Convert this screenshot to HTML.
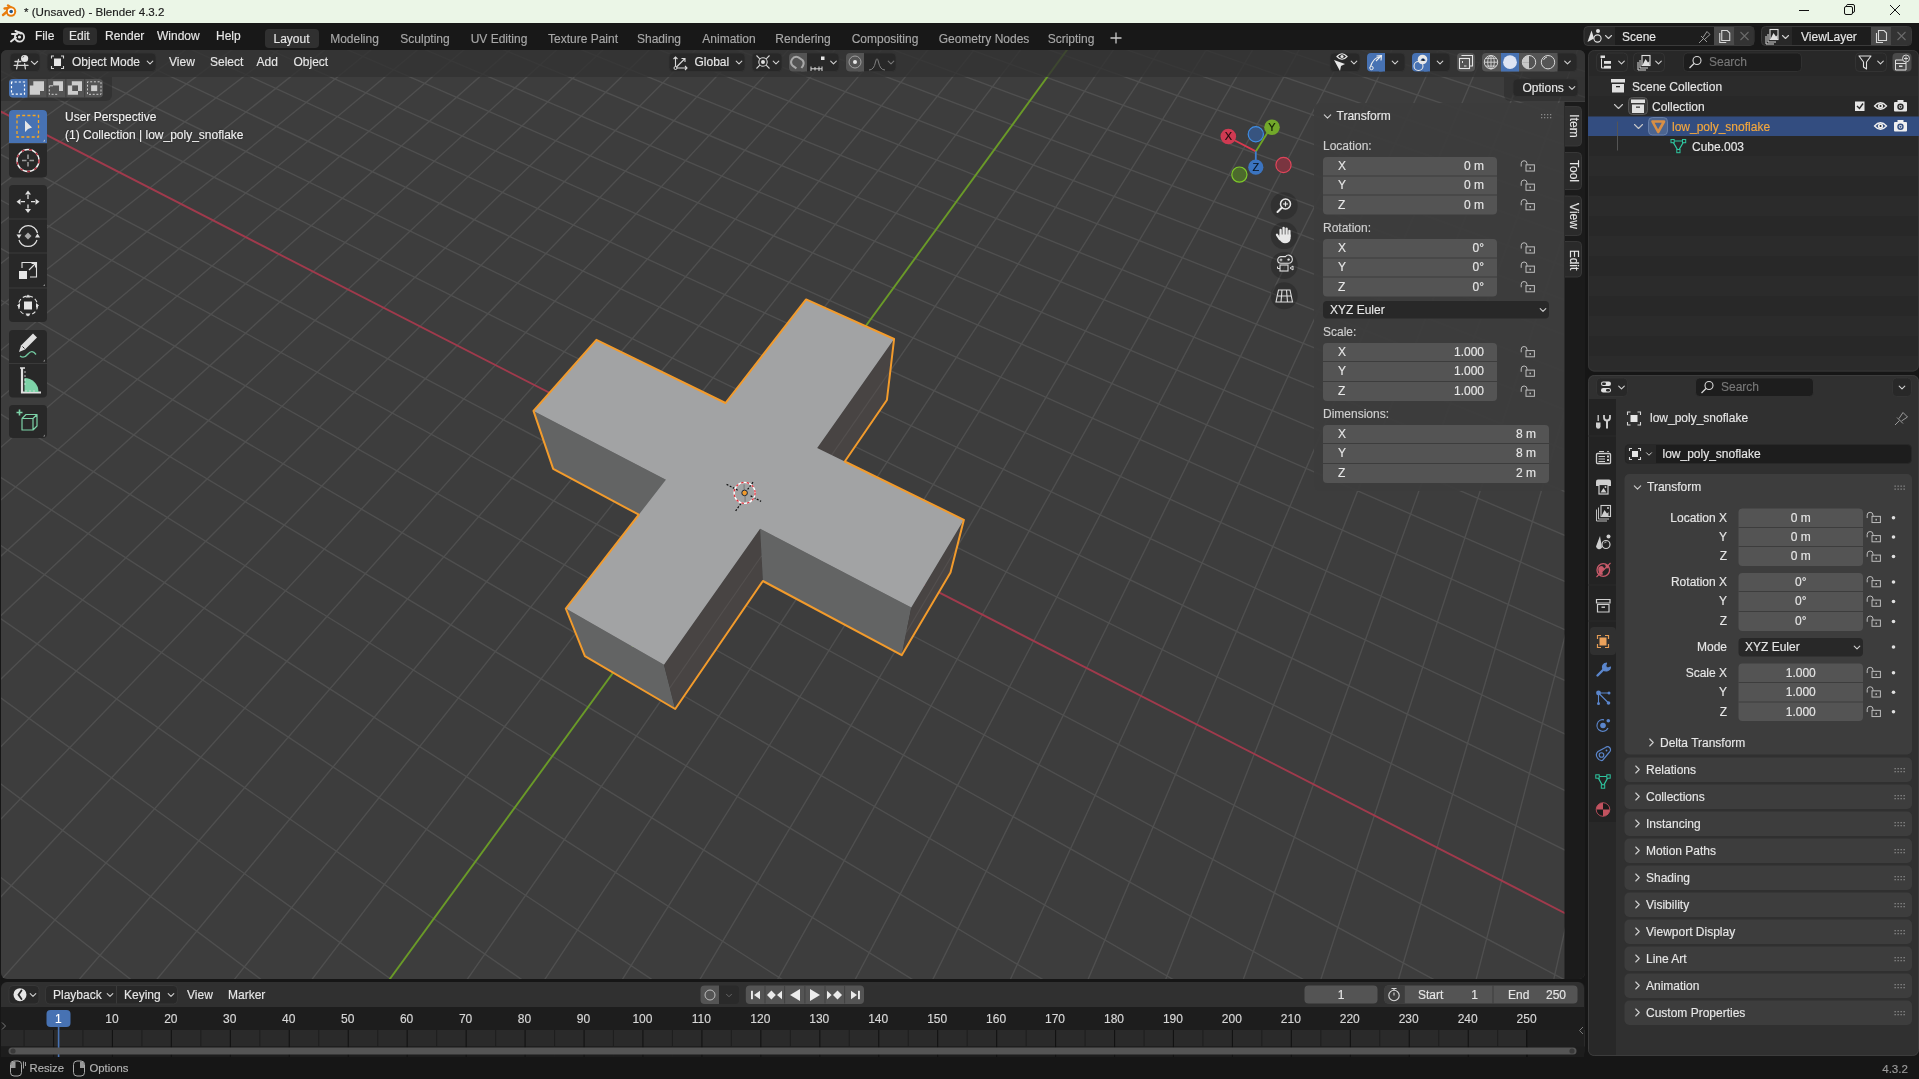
<!DOCTYPE html><html><head><meta charset="utf-8"><style>
html,body{margin:0;padding:0;width:1919px;height:1079px;overflow:hidden;background:#161616;font-family:"Liberation Sans", sans-serif;}
div{box-sizing:border-box}
#root div{-webkit-text-stroke:0.15px currentColor}
#root{position:absolute;left:0;top:0;width:1919px;height:1079px;will-change:transform}
svg{overflow:visible}
</style></head><body><div id="root"><div style="position:absolute;left:0px;top:0px;width:1919px;height:23px;background:#ebf6e7;border-radius:0px;"></div><svg style="position:absolute;left:0px;top:0px;" width="1919" height="23" viewBox="0 0 1919 23"><g transform="translate(10,11.5)"><circle cx="1" cy="0" r="5.2" fill="#e87d0d"/><path d="M-7 3.5L-1 -1.5M-5.5 -3L0 -3.5M-2 -6L4 -2" stroke="#e87d0d" stroke-width="2.4" stroke-linecap="round"/><circle cx="1" cy="0" r="3.2" fill="#fff"/><circle cx="1.2" cy="0" r="1.8" fill="#265787"/></g><path d="M1799 10.5H1809" stroke="#111" stroke-width="1"/><rect x="1844.5" y="6.5" width="8" height="8" rx="1.5" fill="none" stroke="#111"/><path d="M1846.5 6.5V5.5A1.5 1.5 0 0 1 1848 4.5H1853A1.5 1.5 0 0 1 1854.5 6V11A1.5 1.5 0 0 1 1853 12.5H1852.5" fill="none" stroke="#111"/><path d="M1890 5L1900 15M1900 5L1890 15" stroke="#111" stroke-width="1"/></svg><div style="position:absolute;left:24px;top:4.52px;font-size:11.6px;line-height:13.92px;color:#1b1b1b;white-space:pre;">* (Unsaved) - Blender 4.3.2</div><div style="position:absolute;left:0px;top:23px;width:1919px;height:27px;background:#181818;border-radius:0px;"></div><svg style="position:absolute;left:0px;top:23px;" width="1919" height="27" viewBox="0 0 1919 27"><g transform="translate(18,13.5)" stroke="#e0e0e0" fill="none"><circle cx="1.5" cy="0.5" r="4.6" stroke-width="1.8"/><circle cx="1.5" cy="0.5" r="1.6" fill="#e0e0e0" stroke="none"/><path d="M-7 5L-2 1M-6 -2.5H-1M-2.5 -5.5L3 -3" stroke-width="2" stroke-linecap="round"/></g><rect x="63" y="4.5" width="34" height="17.5" rx="4" fill="#2c2c2c"/><rect x="265" y="6" width="54" height="19" rx="4" fill="#303030"/></svg><div style="position:absolute;left:35px;top:29.14px;font-size:12px;line-height:14.40px;color:#e6e6e6;white-space:pre;">File</div><div style="position:absolute;left:69px;top:29.14px;font-size:12px;line-height:14.40px;color:#e6e6e6;white-space:pre;">Edit</div><div style="position:absolute;left:105px;top:29.14px;font-size:12px;line-height:14.40px;color:#e6e6e6;white-space:pre;">Render</div><div style="position:absolute;left:157px;top:29.14px;font-size:12px;line-height:14.40px;color:#e6e6e6;white-space:pre;">Window</div><div style="position:absolute;left:216px;top:29.14px;font-size:12px;line-height:14.40px;color:#e6e6e6;white-space:pre;">Help</div><div style="position:absolute;left:91.5px;width:400px;top:32.14px;font-size:12px;line-height:14.40px;color:#e6e6e6;white-space:pre;text-align:center;">Layout</div><div style="position:absolute;left:154.5px;width:400px;top:32.14px;font-size:12px;line-height:14.40px;color:#a8a8a8;white-space:pre;text-align:center;">Modeling</div><div style="position:absolute;left:225px;width:400px;top:32.14px;font-size:12px;line-height:14.40px;color:#a8a8a8;white-space:pre;text-align:center;">Sculpting</div><div style="position:absolute;left:299px;width:400px;top:32.14px;font-size:12px;line-height:14.40px;color:#a8a8a8;white-space:pre;text-align:center;">UV Editing</div><div style="position:absolute;left:383px;width:400px;top:32.14px;font-size:12px;line-height:14.40px;color:#a8a8a8;white-space:pre;text-align:center;">Texture Paint</div><div style="position:absolute;left:459px;width:400px;top:32.14px;font-size:12px;line-height:14.40px;color:#a8a8a8;white-space:pre;text-align:center;">Shading</div><div style="position:absolute;left:529px;width:400px;top:32.14px;font-size:12px;line-height:14.40px;color:#a8a8a8;white-space:pre;text-align:center;">Animation</div><div style="position:absolute;left:603px;width:400px;top:32.14px;font-size:12px;line-height:14.40px;color:#a8a8a8;white-space:pre;text-align:center;">Rendering</div><div style="position:absolute;left:685px;width:400px;top:32.14px;font-size:12px;line-height:14.40px;color:#a8a8a8;white-space:pre;text-align:center;">Compositing</div><div style="position:absolute;left:784px;width:400px;top:32.14px;font-size:12px;line-height:14.40px;color:#a8a8a8;white-space:pre;text-align:center;">Geometry Nodes</div><div style="position:absolute;left:871px;width:400px;top:32.14px;font-size:12px;line-height:14.40px;color:#a8a8a8;white-space:pre;text-align:center;">Scripting</div><svg style="position:absolute;left:1105px;top:28px;" width="22" height="20" viewBox="0 0 22 20"><path d="M11 4.5V15.5M5.5 10H16.5" stroke="#c8c8c8" stroke-width="1.3"/></svg><svg style="position:absolute;left:0px;top:0px;" width="1919" height="50" viewBox="0 0 1919 50"><rect x="1584.0" y="26.5" width="170.0" height="19" rx="4" fill="#282828" stroke="#3a3a3a" stroke-width="1"/><rect x="1615" y="27" width="99" height="18" fill="#1d1d1d"/><rect x="1714" y="27" width="20.5" height="18" fill="#4a4a4a"/><rect x="1734.5" y="27" width="19.0" height="18" fill="#333333"/><rect x="1734.5" y="27" width="19.0" height="18" rx="4" fill="#333333"/><path d="M1587.5 42L1591.5 30.5L1594 38.5Z" fill="#e0e0e0"/><circle cx="1598" cy="31" r="2" fill="#e0e0e0"/><circle cx="1597.5" cy="38.5" r="3.6" fill="#282828" stroke="#e0e0e0" stroke-width="1.1"/><path d="M1605.5 35.5L1608.5 38.5L1611.5 35.5" stroke="#d0d0d0" stroke-width="1.1" fill="none" stroke-linecap="round" stroke-linejoin="round"/><path d="M1719.75 33V42.5H1726.25" stroke="#d8d8d8" fill="none" stroke-width="1.1"/><path d="M1721.75 30.5H1727.25L1729.75 33V40.5H1721.75Z" stroke="#d8d8d8" fill="none" stroke-width="1.1"/><path d="M1740.5 32L1748.5 40M1748.5 32L1740.5 40" stroke="#6a6a6a" stroke-width="1.1"/><path d="M1699 43L1703.5 38.5M1701 36L1707 42M1703 37.5L1707 31.5L1710 34.5L1704.5 39.5" stroke="#9a9a9a" stroke-width="1" fill="none"/><rect x="1761.5" y="26.5" width="150" height="19" rx="4" fill="#282828" stroke="#3a3a3a" stroke-width="1"/><rect x="1792" y="27" width="79" height="18" fill="#1d1d1d"/><rect x="1871" y="27" width="20" height="18" fill="#4a4a4a"/><rect x="1891" y="27" width="20" height="18" fill="#333333"/><rect x="1891" y="27" width="20" height="18" rx="4" fill="#333333"/><path d="M1766 44V36M1766 44H1774M1768 42V34M1768 42H1776" stroke="#d8d8d8" fill="none" stroke-width="1"/><rect x="1770" y="29.5" width="8" height="10" fill="none" stroke="#e0e0e0" stroke-width="1.1"/><path d="M1770.5 39L1773.5 33L1776 36.5L1777.5 35V39Z" fill="#e0e0e0"/><path d="M1782.5 35.5L1785.5 38.5L1788.5 35.5" stroke="#d0d0d0" stroke-width="1.1" fill="none" stroke-linecap="round" stroke-linejoin="round"/><path d="M1876.5 33V42.5H1883.0" stroke="#d8d8d8" fill="none" stroke-width="1.1"/><path d="M1878.5 30.5H1884.0L1886.5 33V40.5H1878.5Z" stroke="#d8d8d8" fill="none" stroke-width="1.1"/><path d="M1897.5 32L1905.5 40M1905.5 32L1897.5 40" stroke="#6a6a6a" stroke-width="1.1"/></svg><div style="position:absolute;left:1622px;top:29.64px;font-size:12px;line-height:14.40px;color:#e6e6e6;white-space:pre;">Scene</div><div style="position:absolute;left:1801px;top:29.64px;font-size:12px;line-height:14.40px;color:#e6e6e6;white-space:pre;">ViewLayer</div><div style="position:absolute;left:1px;top:50px;width:1584px;height:929px;border-radius:6px;overflow:hidden;background:#3d3d3d"><svg style="position:absolute;left:-1px;top:-50px" width="1919" height="1079"><path d="M-5.00 53.15L14.73 40.00M-5.00 84.85L60.78 40.00M-5.00 118.03L106.83 40.00M-5.00 152.80L152.88 40.00M-5.00 189.28L198.94 40.00M-5.00 227.60L244.99 40.00M-5.00 267.89L291.05 40.00M-5.00 310.33L337.10 40.00M-5.00 355.07L383.16 40.00M-5.00 402.32L429.22 40.00M-5.00 452.30L475.28 40.00M-5.00 505.24L521.34 40.00M-5.00 561.41L567.41 40.00M-5.00 621.13L613.47 40.00M-5.00 684.73L659.54 40.00M-5.00 752.62L705.60 40.00M-5.00 825.24L751.67 40.00M-5.00 903.09L797.74 40.00M-5.00 986.78L843.81 40.00M61.43 1000.00L889.88 40.00M139.71 1000.00L935.96 40.00M217.99 1000.00L982.03 40.00M296.27 1000.00L1028.10 40.00M452.85 1000.00L1120.26 40.00M531.14 1000.00L1166.34 40.00M609.43 1000.00L1212.42 40.00M687.73 1000.00L1258.50 40.00M766.03 1000.00L1304.58 40.00M844.33 1000.00L1350.66 40.00M922.63 1000.00L1396.75 40.00M1000.93 1000.00L1442.83 40.00M1079.24 1000.00L1488.92 40.00M1157.54 1000.00L1535.01 40.00M1235.85 1000.00L1581.10 40.00M1314.17 1000.00L1600.00 123.39M1392.48 1000.00L1600.00 290.53M1470.79 1000.00L1600.00 501.02M1549.11 1000.00L1600.00 774.20M-5.00 974.92L25.55 1000.00M-5.00 872.94L156.96 1000.00M-5.00 779.58L288.38 1000.00M-5.00 693.81L419.81 1000.00M-5.00 614.74L551.24 1000.00M-5.00 541.60L682.67 1000.00M-5.00 473.76L814.11 1000.00M-5.00 410.66L945.56 1000.00M-5.00 351.82L1077.01 1000.00M-5.00 296.82L1208.47 1000.00M-5.00 245.30L1339.94 1000.00M-5.00 196.94L1471.41 1000.00M-5.00 151.46L1600.00 998.48M-5.00 68.15L1600.00 867.58M15.83 40.00L1600.00 807.50M93.18 40.00L1600.00 750.60M170.54 40.00L1600.00 696.66M247.89 40.00L1600.00 645.43M325.25 40.00L1600.00 596.73M402.62 40.00L1600.00 550.37M479.99 40.00L1600.00 506.18M557.36 40.00L1600.00 464.02M634.73 40.00L1600.00 423.75M712.11 40.00L1600.00 385.24M789.49 40.00L1600.00 348.39M866.87 40.00L1600.00 313.08M944.26 40.00L1600.00 279.23M1021.65 40.00L1600.00 246.74M1099.04 40.00L1600.00 215.53M1176.44 40.00L1600.00 185.53M1253.84 40.00L1600.00 156.68M1331.25 40.00L1600.00 128.89M1408.66 40.00L1600.00 102.13M1486.07 40.00L1600.00 76.33M1563.48 40.00L1600.00 51.44" stroke="#4f4f4f" stroke-width="1.4" fill="none"/><path d="M-5.00 108.60L1600.00 931.14" stroke="#a03a4c" stroke-width="1.9" fill="none"/><path d="M374.56 1000.00L1074.18 40.00" stroke="#6a9a28" stroke-width="1.9" fill="none"/><polygon points="533.5,410.9 665.9,479.8 676.0,534.6 553.2,468.9" fill="#636464" /><polygon points="565.8,608.5 664.0,664.8 675.2,709.0 584.9,656.2" fill="#636464" /><polygon points="664.0,664.8 760.1,528.8 762.9,581.0 675.2,709.0" fill="#484443" /><polygon points="760.1,528.8 911.3,607.5 901.7,655.2 762.9,581.0" fill="#636464" /><polygon points="911.3,607.5 963.9,519.8 950.5,572.5 901.7,655.2" fill="#484443" /><polygon points="817.2,447.9 894.1,339.0 886.9,400.0 815.5,504.3" fill="#484443" /><path d="M816.3 477.2L890.4 370.7" stroke="rgba(255,255,255,0.06)" stroke-width="1.2"/><path d="M669.8 687.9L761.5 556.0" stroke="rgba(255,255,255,0.06)" stroke-width="1.2"/><path d="M906.3 632.4L956.9 547.3" stroke="rgba(255,255,255,0.06)" stroke-width="1.2"/><polygon points="596.4,339.8 725.5,403.0 806.1,299.4 894.1,339.0 817.2,447.9 963.9,519.8 911.3,607.5 760.1,528.8 664.0,664.8 565.8,608.5 665.9,479.8 533.5,410.9" fill="#a2a3a4" /><polygon points="596.4,339.8 725.5,403.0 806.1,299.4 894.1,339.0 886.9,400.0 844.8,461.5 963.9,519.8 950.5,572.5 901.7,655.2 762.9,581.0 675.2,709.0 584.9,656.2 565.8,608.5 638.8,514.7 553.2,468.9 533.5,410.9" fill="none" stroke="#f29b2c" stroke-width="2" stroke-linejoin="round"/></svg><div style="position:absolute;left:0;top:0;width:1584px;height:27px;background:rgba(50,50,50,0.8)"></div><div style="position:absolute;left:0;top:27px;width:111px;height:24px;background:rgba(44,44,44,0.55);border-bottom-right-radius:6px"></div><div style="position:absolute;left:1503px;top:27px;width:81px;height:24px;background:rgba(44,44,44,0.55);border-bottom-left-radius:6px"></div><div style="position:absolute;left:1564px;top:52px;width:20px;height:877px;background:#1b1b1b"></div></div><svg style="position:absolute;left:0px;top:0px;" width="1600" height="110" viewBox="0 0 1600 110"><rect x="10" y="53" width="30" height="18.5" rx="4" fill="#282828" stroke="#333" stroke-width="0.8"/><g stroke="#d4d4d4" stroke-width="1.3" fill="none" stroke-linecap="round"><path d="M15 61.5H20.8M14.2 65.4H28M18.5 59.3L16.6 68.8M24.6 63.6L25.4 68.8"/></g><circle cx="24.6" cy="58.5" r="3.6" fill="#e2e2e2"/><path d="M22.8 57.5A2 2 0 0 1 24.2 56.2" stroke="#333" stroke-width="0.8" fill="none"/><path d="M31.4 61.35L34.5 64.45L37.6 61.35" stroke="#d0d0d0" stroke-width="1.2" fill="none" stroke-linecap="round" stroke-linejoin="round"/><rect x="47" y="53" width="109" height="18.5" rx="4" fill="#282828" stroke="#333" stroke-width="0.8"/><g stroke="#d8d8d8" stroke-width="1.1" fill="none"><path d="M51.5 58.5V56H54M61 56H63.5V58.5M63.5 66V68.5H61M54 68.5H51.5V66"/></g><rect x="54" y="58.5" width="7" height="7.5" fill="#e6e6e6"/><path d="M147.2 61.1L150 63.9L152.8 61.1" stroke="#d0d0d0" stroke-width="1.1" fill="none" stroke-linecap="round" stroke-linejoin="round"/></svg><div style="position:absolute;left:72px;top:54.64px;font-size:12px;line-height:14.40px;color:#e6e6e6;white-space:pre;">Object Mode</div><div style="position:absolute;left:169px;top:54.64px;font-size:12px;line-height:14.40px;color:#e6e6e6;white-space:pre;">View</div><div style="position:absolute;left:210px;top:54.64px;font-size:12px;line-height:14.40px;color:#e6e6e6;white-space:pre;">Select</div><div style="position:absolute;left:256.5px;top:54.64px;font-size:12px;line-height:14.40px;color:#e6e6e6;white-space:pre;">Add</div><div style="position:absolute;left:293.5px;top:54.64px;font-size:12px;line-height:14.40px;color:#e6e6e6;white-space:pre;">Object</div><svg style="position:absolute;left:0px;top:0px;" width="1600" height="110" viewBox="0 0 1600 110"><rect x="669" y="53" width="76" height="18.5" rx="4" fill="#282828" stroke="#333" stroke-width="0.8"/><g stroke="#d8d8d8" stroke-width="1.1" fill="none"><path d="M675.5 57V68H687M675.5 68L685 58.5M681.5 58.5H685V62M673.5 59L675.5 57L677.5 59M685 66L687 68L685 70"/></g><circle cx="675.5" cy="68" r="1.5" fill="#282828" stroke="#d8d8d8" stroke-width="1"/><path d="M736.2 61.1L739 63.9L741.8 61.1" stroke="#d0d0d0" stroke-width="1.1" fill="none" stroke-linecap="round" stroke-linejoin="round"/><rect x="752" y="53" width="30" height="18.5" rx="4" fill="#282828" stroke="#333" stroke-width="0.8"/><g stroke="#d8d8d8" stroke-width="1.1" fill="none"><circle cx="763" cy="62" r="4.2"/><path d="M756.5 55.5L759.8 58.8M769.5 55.5L766.2 58.8M756.5 68.5L759.8 65.2M769.5 68.5L766.2 65.2"/></g><circle cx="763" cy="62" r="2" fill="#e0e0e0"/><path d="M773.2 61.1L776 63.9L778.8 61.1" stroke="#d0d0d0" stroke-width="1.1" fill="none" stroke-linecap="round" stroke-linejoin="round"/><rect x="789" y="53" width="50" height="18.5" rx="4" fill="#282828" stroke="#333" stroke-width="0.8"/><rect x="789" y="53" width="18" height="18.5" rx="4" fill="#545454"/><rect x="801" y="53" width="6" height="18.5" fill="#545454"/><path d="M795.5 68L792.5 65A5.2 5.2 0 0 1 799.5 57.5L803 61A5.2 5.2 0 0 1 802.5 66.5L800.5 68.5" stroke="#a8a8a8" stroke-width="2" fill="none" transform="rotate(-10 798 63)"/><path d="M811 66.5V71M819 66.5V71M811 68.8H822M815 67V70.5M822 66.5V71" stroke="#d8d8d8" stroke-width="1"/><rect x="821" y="56.5" width="3.5" height="3.5" fill="#e6e6e6"/><path d="M830.7 61.1L833.5 63.9L836.3 61.1" stroke="#d0d0d0" stroke-width="1.1" fill="none" stroke-linecap="round" stroke-linejoin="round"/><rect x="846" y="53" width="50" height="18.5" rx="4" fill="#282828" stroke="#333" stroke-width="0.8"/><rect x="846" y="53" width="18" height="18.5" rx="4" fill="#545454"/><rect x="858" y="53" width="6" height="18.5" fill="#545454"/><circle cx="855" cy="62" r="6" stroke="#a0a0a0" stroke-width="1" fill="none"/><circle cx="855" cy="62" r="2" fill="#e8e8e8"/><path d="M869 70Q874 70 875.5 62Q877 55.5 878.5 62Q880 70 885 70" stroke="#808080" stroke-width="1" fill="none"/><path d="M888.2 61.1L891 63.9L893.8 61.1" stroke="#777" stroke-width="1.1" fill="none" stroke-linecap="round" stroke-linejoin="round"/><rect x="1330" y="53" width="30" height="18.5" rx="4" fill="#282828" stroke="#333" stroke-width="0.8"/><path d="M1334 60L1340 71L1341 66L1345 64Z" fill="#e6e6e6"/><path d="M1337 56.5Q1342 51 1347 56.5Q1342 62 1337 56.5Z" fill="none" stroke="#e6e6e6" stroke-width="1.2"/><circle cx="1342" cy="56.5" r="1.6" fill="#e6e6e6"/><path d="M1351.2 61.1L1354 63.9L1356.8 61.1" stroke="#d0d0d0" stroke-width="1.1" fill="none" stroke-linecap="round" stroke-linejoin="round"/><rect x="1367" y="53" width="38" height="18.5" rx="4" fill="#282828" stroke="#333" stroke-width="0.8"/><rect x="1367" y="53" width="18" height="18.5" rx="4" fill="#4772b3"/><rect x="1379" y="53" width="6" height="18.5" fill="#4772b3"/><path d="M1370 68Q1373 57 1381 56.5M1376.5 56L1381.5 55.5L1381 60.5M1381.5 55.5L1376 61" stroke="#f0f0f0" stroke-width="1.1" fill="none"/><circle cx="1371.5" cy="68" r="1.7" fill="#4772b3" stroke="#f0f0f0" stroke-width="1"/><path d="M1392.2 61.1L1395 63.9L1397.8 61.1" stroke="#d0d0d0" stroke-width="1.1" fill="none" stroke-linecap="round" stroke-linejoin="round"/><rect x="1412" y="53" width="38" height="18.5" rx="4" fill="#282828" stroke="#333" stroke-width="0.8"/><rect x="1412" y="53" width="18" height="18.5" rx="4" fill="#4772b3"/><rect x="1424" y="53" width="6" height="18.5" fill="#4772b3"/><circle cx="1422.5" cy="59.5" r="4.8" fill="#e8e8e8"/><circle cx="1418.5" cy="66" r="4.5" fill="none" stroke="#e8e8e8" stroke-width="1.1"/><path d="M1421 60.5A2 2 0 0 1 1425 61" stroke="#4772b3" stroke-width="1"/><path d="M1437.2 61.1L1440 63.9L1442.8 61.1" stroke="#d0d0d0" stroke-width="1.1" fill="none" stroke-linecap="round" stroke-linejoin="round"/><rect x="1457" y="53" width="18" height="18.5" rx="4" fill="#545454"/><rect x="1459.5" y="58.5" width="10" height="10" fill="none" stroke="#e6e6e6" stroke-width="1.1"/><path d="M1462 56V55.5H1472.5V66H1470" fill="none" stroke="#e6e6e6" stroke-width="1.1"/><path d="M1462.5 61V63M1464 66H1466.5" stroke="#e6e6e6"/><rect x="1482" y="53" width="95" height="18.5" rx="4" fill="#282828" stroke="#333" stroke-width="0.8"/><rect x="1482" y="53" width="75.5" height="18.5" rx="4" fill="#545454"/><rect x="1550" y="53" width="7.5" height="18.5" fill="#545454"/><rect x="1501" y="53" width="18" height="18.5" fill="#4772b3"/><circle cx="1491" cy="62.2" r="6.7" fill="none" stroke="#d8d8d8" stroke-width="1"/><path d="M1484.3 62.2H1497.7M1491 55.5V69M1486 58.3H1496M1486 66.1H1496" stroke="#d8d8d8" stroke-width="0.9" fill="none"/><ellipse cx="1491" cy="62.2" rx="3.3" ry="6.7" fill="none" stroke="#d8d8d8" stroke-width="0.9"/><circle cx="1510" cy="62.2" r="6.9" fill="#dde4f3"/><circle cx="1529" cy="62.2" r="6.7" fill="none" stroke="#d8d8d8" stroke-width="1"/><path d="M1529 55.5A6.7 6.7 0 0 0 1522.3 62.2H1529Z" fill="#c8c8c8"/><path d="M1529 62.2V68.9A6.7 6.7 0 0 1 1522.3 62.2Z" fill="#c8c8c8"/><circle cx="1548" cy="62.2" r="6.7" fill="none" stroke="#d8d8d8" stroke-width="1"/><path d="M1543.5 60A5 5 0 0 1 1547 57" stroke="#d8d8d8" stroke-width="1" fill="none"/><path d="M1564.7 61.1L1567.5 63.9L1570.3 61.1" stroke="#d0d0d0" stroke-width="1.1" fill="none" stroke-linecap="round" stroke-linejoin="round"/><rect x="1513" y="79" width="65" height="17.5" rx="4" fill="#282828" stroke="#333" stroke-width="0.8"/><path d="M1569.2 86.6L1572 89.4L1574.8 86.6" stroke="#d0d0d0" stroke-width="1.1" fill="none" stroke-linecap="round" stroke-linejoin="round"/><rect x="9" y="79" width="94" height="18.5" rx="4" fill="#545454"/><rect x="9" y="79" width="18.5" height="18.5" rx="4" fill="#4772b3"/><rect x="22" y="79" width="5.5" height="18.5" fill="#4772b3"/><rect x="27.8" y="79" width="1" height="18.5" fill="#3d3d3d"/><rect x="46.6" y="79" width="1" height="18.5" fill="#3d3d3d"/><rect x="65.4" y="79" width="1" height="18.5" fill="#3d3d3d"/><rect x="84.2" y="79" width="1" height="18.5" fill="#3d3d3d"/><rect x="11.5" y="82" width="13" height="12.2" fill="none" stroke="#fff" stroke-width="1.2" stroke-dasharray="2.2 1.9" stroke-dashoffset="1"/><path d="M33.3 81.3H44V91H40V94.8H29.8V85.4H33.3Z" fill="#cdcdcd"/><path d="M53.2 81.3H63V91H59V85.4H53.2Z" fill="#cdcdcd"/><path d="M49.3 85.8V94.3H58.5" fill="none" stroke="#cdcdcd" stroke-width="1" stroke-dasharray="2 1.6"/><path d="M49.3 85.8H53" stroke="#cdcdcd" stroke-width="1"/><path d="M71.8 81.3H82V91H78V94.8H67.8V85.4H71.8Z" fill="#cdcdcd"/><rect x="72.2" y="85.4" width="5.8" height="5.6" fill="#545454"/><rect x="87.5" y="81.8" width="13.5" height="12.5" fill="none" stroke="#cdcdcd" stroke-width="1" stroke-dasharray="2 1.7" stroke-dashoffset="1"/><rect x="91.1" y="85.3" width="6.1" height="5.8" fill="#cdcdcd"/></svg><div style="position:absolute;left:1522.5px;top:80.64px;font-size:12px;line-height:14.40px;color:#e6e6e6;white-space:pre;">Options</div><div style="position:absolute;left:694.5px;top:54.64px;font-size:12px;line-height:14.40px;color:#e6e6e6;white-space:pre;">Global</div><svg style="position:absolute;left:0px;top:0px;" width="60" height="450" viewBox="0 0 60 450"><rect x="9" y="110" width="38" height="67.5" rx="4" fill="#282828"/><rect x="9" y="143" width="38" height="1" fill="#3a3a3a"/><rect x="9" y="185" width="38" height="137" rx="4" fill="#282828"/><rect x="9" y="218.5" width="38" height="1" fill="#3a3a3a"/><rect x="9" y="252.5" width="38" height="1" fill="#3a3a3a"/><rect x="9" y="287.5" width="38" height="1" fill="#3a3a3a"/><rect x="9" y="330" width="38" height="67.5" rx="4" fill="#282828"/><rect x="9" y="363" width="38" height="1" fill="#3a3a3a"/><rect x="9" y="405" width="38" height="33" rx="4" fill="#282828"/><path d="M13 110H43A4 4 0 0 1 47 114V143H9V114A4 4 0 0 1 13 110Z" fill="#4772b3"/><rect x="17" y="115.5" width="21.5" height="21.5" fill="none" stroke="#f5a623" stroke-width="1.3" stroke-dasharray="3 2.2"/><path d="M25 120.5V132L28 129L32 127.5Z" fill="#e6e6e6"/><path d="M45 139.5L43 141.5H45Z" fill="#c0c8d8"/><circle cx="28" cy="160.5" r="11" fill="none" stroke="#f0f0f0" stroke-width="1.4"/><circle cx="28" cy="160.5" r="11" fill="none" stroke="#b02a3a" stroke-width="1.4" stroke-dasharray="3 4.5"/><path d="M28 154.5V159M28 162V166.5M22 160.5H26.5M29.5 160.5H34" stroke="#9a9a9a" stroke-width="1.6"/><g fill="#e0e0e0"><path d="M28 190.5L31 194.5H25Z"/><path d="M28 213L31 209H25Z"/><path d="M16.5 201.7L20.5 198.7V204.7Z"/><path d="M39.5 201.7L35.5 198.7V204.7Z"/></g><path d="M28 195V199M28 204.5V208.5M21 201.7H25M31 201.7H35" stroke="#e0e0e0" stroke-width="1.3"/><path d="M19 233A9.5 9.5 0 0 1 37.5 233M37 240A9.5 9.5 0 0 1 19 240" fill="none" stroke="#e0e0e0" stroke-width="1.2"/><path d="M28 232.5L31.5 236L28 239.5L24.5 236Z" fill="#a8a8a8"/><path d="M16.5 234.5H21.5L19 238.5Z" fill="#e0e0e0"/><path d="M35 237.5H40L37.5 233.5Z" fill="#e0e0e0"/><rect x="19" y="271" width="8" height="8" fill="#e6e6e6"/><path d="M22 268V262.5H36.5V277H30" stroke="#e0e0e0" stroke-width="1.1" fill="none"/><path d="M29 270L35 264M31.5 263.5H35.5V267.5" stroke="#e0e0e0" stroke-width="1.1" fill="none"/><path d="M45 284L43 286H45Z" fill="#888"/><circle cx="28" cy="305.5" r="9.5" fill="none" stroke="#e0e0e0" stroke-width="1.1" stroke-dasharray="4 2.5"/><rect x="24" y="301.5" width="8" height="8" fill="#e6e6e6"/><g fill="#e0e0e0"><path d="M28 294.5L30.5 297.5H25.5Z"/><path d="M28 316.5L30.5 313.5H25.5Z"/><path d="M17 305.5L20 303V308Z"/><path d="M39 305.5L36 303V308Z"/></g><path d="M19 352L21 345.5L33 333.5L37 337.5L25 349.5Z" fill="#e0e0e0"/><path d="M22.5 346.5L24.5 348.5" stroke="#282828" stroke-width="1"/><path d="M20 356Q24 359 28 354Q32 349 36 354.5" stroke="#72c9a0" stroke-width="1.3" fill="none"/><path d="M45 359.5L43 361.5H45Z" fill="#888"/><path d="M22 368V392.5H41" stroke="#e0e0e0" stroke-width="2.2" fill="none"/><path d="M20 368H25" stroke="#e0e0e0" stroke-width="1.5"/><path d="M24.5 378A14 14 0 0 1 38.5 392H24.5Z" fill="#7dd3a8"/><path d="M24 372H26M24 376H26M24 380H26M24 384H26M26 390V392M30 390V392M34 390V392" stroke="#e0e0e0" stroke-width="0.8"/><path d="M19.5 409.5V415.5M16.5 412.5H22.5" stroke="#7dd3a8" stroke-width="1.6"/><path d="M22 418.5H33V430H22Z M22 418.5L26 414.5H37V426L33 430M33 418.5L37 414.5" stroke="#7dd3a8" stroke-width="1.2" fill="none" stroke-linejoin="round"/><path d="M45 434.5L43 436.5H45Z" fill="#888"/></svg><div style="position:absolute;left:65px;top:109.64px;font-size:12px;line-height:14.40px;color:#f0f0f0;white-space:pre;text-shadow:0 0 2px rgba(0,0,0,.6)">User Perspective</div><div style="position:absolute;left:65px;top:127.64px;font-size:12px;line-height:14.40px;color:#f0f0f0;white-space:pre;text-shadow:0 0 2px rgba(0,0,0,.6)">(1) Collection | low_poly_snoflake</div><svg style="position:absolute;left:0px;top:0px;" width="1400" height="400" viewBox="0 0 1400 400"><circle cx="1283.5" cy="165" r="7.6" fill="#7a3540" stroke="#e0455a" stroke-width="1.2"/><circle cx="1239.4" cy="174.6" r="7.6" fill="#4c6a2c" stroke="#7ec82a" stroke-width="1.2"/><circle cx="1255.8" cy="134.3" r="7.6" fill="#375480" stroke="#3f8fe6" stroke-width="1.2"/><path d="M1255.8 151.4L1233 139.5" stroke="#d93a4f" stroke-width="1.8"/><path d="M1255.8 151.4L1268.5 131" stroke="#6fa525" stroke-width="1.8"/><path d="M1255.8 151.4V162" stroke="#3f7fd0" stroke-width="1.8"/><circle cx="1255.8" cy="167.2" r="7.6" fill="#3b74c0"/><circle cx="1228.3" cy="136.5" r="7.8" fill="#cf3a52"/><circle cx="1272" cy="127.3" r="7.8" fill="#72a82a"/><circle cx="1284.2" cy="205.7" r="13.5" fill="rgba(30,30,30,0.35)"/><circle cx="1284.2" cy="235.6" r="13.5" fill="rgba(30,30,30,0.35)"/><circle cx="1284.2" cy="265.4" r="13.5" fill="rgba(30,30,30,0.35)"/><circle cx="1284.2" cy="295.7" r="13.5" fill="rgba(30,30,30,0.35)"/><circle cx="1285.5" cy="204" r="5" fill="none" stroke="#e8e8e8" stroke-width="1.5"/><path d="M1285.5 201.5V206.5M1283 204H1288" stroke="#e8e8e8" stroke-width="1.2"/><path d="M1281.8 207.8L1277.5 212" stroke="#e8e8e8" stroke-width="2" stroke-linecap="round"/><g stroke="#e8e8e8" stroke-linecap="round" fill="none"><path d="M1280.6 236V230M1283.6 235V227.8M1286.6 235V228.6M1289.4 236.5V231" stroke-width="2.3"/><path d="M1277 234.8L1279.8 239" stroke-width="2.3"/></g><path d="M1279.5 234.5H1290.6V238.5Q1290 243.2 1285 243.2Q1281.3 243.2 1279.5 239.5Z" fill="#e8e8e8"/><path d="M1281 263.2A3.3 3.3 0 0 1 1281 256.6H1285.5A3.8 3.8 0 0 1 1292.3 259.2A3.6 3.6 0 0 1 1288.5 263.2Z" fill="none" stroke="#e0e0e0" stroke-width="1.1"/><circle cx="1288.6" cy="259.6" r="1.2" fill="#e0e0e0"/><path d="M1279.6 259.9H1282.4M1281 258.5V261.3" stroke="#e0e0e0" stroke-width="0.9"/><rect x="1280" y="265" width="8" height="6" fill="none" stroke="#e0e0e0" stroke-width="1.1"/><path d="M1277.5 266.5V268.5H1280" stroke="#e0e0e0" stroke-width="1" fill="none"/><path d="M1290 268L1293 266V270Z" fill="none" stroke="#e0e0e0" stroke-width="1"/><path d="M1278.5 290H1290L1292.5 302H1276Z M1278 296H1291M1282 290L1281 302M1286.5 290L1287.5 302" fill="none" stroke="#e0e0e0" stroke-width="1.1"/></svg><div style="position:absolute;left:1028.3px;width:400px;top:130.09px;font-size:11px;line-height:13.20px;color:#1a0a0c;white-space:pre;text-align:center;">X</div><div style="position:absolute;left:1072px;width:400px;top:120.89px;font-size:11px;line-height:13.20px;color:#0f1a05;white-space:pre;text-align:center;">Y</div><div style="position:absolute;left:1055.8px;width:400px;top:160.79px;font-size:11px;line-height:13.20px;color:#0a1524;white-space:pre;text-align:center;">Z</div><svg style="position:absolute;left:0px;top:0px;" width="1000" height="700" viewBox="0 0 1000 700"><g transform="translate(744.6,492.9)"><path d="M-18 -8.5L-6.5 -2.5M6 3L16.5 8.5M-9 18L-3.5 10.5M3 -3.5L9 -11.5" stroke="#111" stroke-width="1.2" stroke-dasharray="2 1.5"/><path d="M-0.5 -8.5V-3M0.5 3V9" stroke="#777" stroke-width="1"/><circle cx="0" cy="0" r="10.5" fill="none" stroke="#fff" stroke-width="1.3"/><circle cx="0" cy="0" r="10.5" fill="none" stroke="#e0303c" stroke-width="1.3" stroke-dasharray="2.5 3.2"/><circle cx="0" cy="0" r="2.8" fill="#f29b2c" stroke="#1a2a40" stroke-width="1"/></g></svg><svg style="position:absolute;left:0px;top:0px;" width="1600" height="500" viewBox="0 0 1600 500"><rect x="1314" y="103" width="251" height="388" rx="6" fill="rgba(61,61,61,0.94)"/><rect x="1564.5" y="102" width="1" height="877" fill="#1b1b1b"/><path d="M1324.3 114.9L1327.5 118.1L1330.7 114.9" stroke="#cfcfcf" stroke-width="1.1" fill="none" stroke-linecap="round" stroke-linejoin="round"/><rect x="1541" y="114" width="1.3" height="1.3" fill="#888"/><rect x="1541" y="117" width="1.3" height="1.3" fill="#888"/><rect x="1544" y="114" width="1.3" height="1.3" fill="#888"/><rect x="1544" y="117" width="1.3" height="1.3" fill="#888"/><rect x="1547" y="114" width="1.3" height="1.3" fill="#888"/><rect x="1547" y="117" width="1.3" height="1.3" fill="#888"/><rect x="1550" y="114" width="1.3" height="1.3" fill="#888"/><rect x="1550" y="117" width="1.3" height="1.3" fill="#888"/><rect x="1323" y="157" width="174" height="57.5" rx="4" fill="#545454"/><rect x="1323" y="175.5" width="174" height="1" fill="#3d3d3d"/><rect x="1323" y="194.5" width="174" height="1" fill="#3d3d3d"/><rect x="1323" y="239" width="174" height="57.5" rx="4" fill="#545454"/><rect x="1323" y="257.5" width="174" height="1" fill="#3d3d3d"/><rect x="1323" y="276.5" width="174" height="1" fill="#3d3d3d"/><rect x="1323" y="343" width="174" height="58" rx="4" fill="#545454"/><rect x="1323" y="361" width="174" height="1" fill="#3d3d3d"/><rect x="1323" y="381" width="174" height="1" fill="#3d3d3d"/><rect x="1323" y="425" width="226" height="58" rx="4" fill="#545454"/><rect x="1323" y="443" width="226" height="1" fill="#3d3d3d"/><rect x="1323" y="463" width="226" height="1" fill="#3d3d3d"/><rect x="1323" y="301" width="226" height="17.5" rx="4" fill="#282828"/><path d="M1540.2 308.6L1543 311.4L1545.8 308.6" stroke="#d0d0d0" stroke-width="1.1" fill="none" stroke-linecap="round" stroke-linejoin="round"/><path d="M1521.2 166.55V163.65A2.9 2.9 0 0 1 1527 163.65V164.65" fill="none" stroke="#bdbdbd" stroke-width="1"/><rect x="1526" y="164.85" width="8.4" height="6.2" fill="none" stroke="#bdbdbd" stroke-width="1"/><rect x="1529.5" y="167.25" width="1.4" height="1.8" fill="#bdbdbd"/><path d="M1521.2 185.8V182.9A2.9 2.9 0 0 1 1527 182.9V183.9" fill="none" stroke="#bdbdbd" stroke-width="1"/><rect x="1526" y="184.1" width="8.4" height="6.2" fill="none" stroke="#bdbdbd" stroke-width="1"/><rect x="1529.5" y="186.5" width="1.4" height="1.8" fill="#bdbdbd"/><path d="M1521.2 205.3V202.4A2.9 2.9 0 0 1 1527 202.4V203.4" fill="none" stroke="#bdbdbd" stroke-width="1"/><rect x="1526" y="203.6" width="8.4" height="6.2" fill="none" stroke="#bdbdbd" stroke-width="1"/><rect x="1529.5" y="206.0" width="1.4" height="1.8" fill="#bdbdbd"/><path d="M1521.2 248.55V245.65A2.9 2.9 0 0 1 1527 245.65V246.65" fill="none" stroke="#bdbdbd" stroke-width="1"/><rect x="1526" y="246.85" width="8.4" height="6.2" fill="none" stroke="#bdbdbd" stroke-width="1"/><rect x="1529.5" y="249.25" width="1.4" height="1.8" fill="#bdbdbd"/><path d="M1521.2 267.8V264.9A2.9 2.9 0 0 1 1527 264.9V265.9" fill="none" stroke="#bdbdbd" stroke-width="1"/><rect x="1526" y="266.1" width="8.4" height="6.2" fill="none" stroke="#bdbdbd" stroke-width="1"/><rect x="1529.5" y="268.5" width="1.4" height="1.8" fill="#bdbdbd"/><path d="M1521.2 287.3V284.4A2.9 2.9 0 0 1 1527 284.4V285.4" fill="none" stroke="#bdbdbd" stroke-width="1"/><rect x="1526" y="285.6" width="8.4" height="6.2" fill="none" stroke="#bdbdbd" stroke-width="1"/><rect x="1529.5" y="288.0" width="1.4" height="1.8" fill="#bdbdbd"/><path d="M1521.2 352.3V349.4A2.9 2.9 0 0 1 1527 349.4V350.4" fill="none" stroke="#bdbdbd" stroke-width="1"/><rect x="1526" y="350.6" width="8.4" height="6.2" fill="none" stroke="#bdbdbd" stroke-width="1"/><rect x="1529.5" y="353.0" width="1.4" height="1.8" fill="#bdbdbd"/><path d="M1521.2 371.8V368.9A2.9 2.9 0 0 1 1527 368.9V369.9" fill="none" stroke="#bdbdbd" stroke-width="1"/><rect x="1526" y="370.1" width="8.4" height="6.2" fill="none" stroke="#bdbdbd" stroke-width="1"/><rect x="1529.5" y="372.5" width="1.4" height="1.8" fill="#bdbdbd"/><path d="M1521.2 391.8V388.9A2.9 2.9 0 0 1 1527 388.9V389.9" fill="none" stroke="#bdbdbd" stroke-width="1"/><rect x="1526" y="390.1" width="8.4" height="6.2" fill="none" stroke="#bdbdbd" stroke-width="1"/><rect x="1529.5" y="392.5" width="1.4" height="1.8" fill="#bdbdbd"/><path d="M1565 106.5H1577.5A4 4 0 0 1 1581.5 110.5V142.0A4 4 0 0 1 1577.5 146.0H1565" fill="#303030" stroke="#3a3a3a" stroke-width="0.9"/><path d="M1565 152.5H1577.5A4 4 0 0 1 1581.5 156.5V185.5A4 4 0 0 1 1577.5 189.5H1565" fill="#2a2a2a" stroke="#3a3a3a" stroke-width="0.9"/><path d="M1565 196.0H1577.5A4 4 0 0 1 1581.5 200.0V231.5A4 4 0 0 1 1577.5 235.5H1565" fill="#2a2a2a" stroke="#3a3a3a" stroke-width="0.9"/><path d="M1565 241.5H1577.5A4 4 0 0 1 1581.5 245.5V273.0A4 4 0 0 1 1577.5 277.0H1565" fill="#2a2a2a" stroke="#3a3a3a" stroke-width="0.9"/></svg><div style="position:absolute;left:1336.5px;top:108.64px;font-size:12px;line-height:14.40px;color:#e6e6e6;white-space:pre;">Transform</div><div style="position:absolute;left:1323px;top:139.14px;font-size:12px;line-height:14.40px;color:#cfcfcf;white-space:pre;">Location:</div><div style="position:absolute;left:1323px;top:220.64px;font-size:12px;line-height:14.40px;color:#cfcfcf;white-space:pre;">Rotation:</div><div style="position:absolute;left:1323px;top:324.64px;font-size:12px;line-height:14.40px;color:#cfcfcf;white-space:pre;">Scale:</div><div style="position:absolute;left:1323px;top:406.64px;font-size:12px;line-height:14.40px;color:#cfcfcf;white-space:pre;">Dimensions:</div><div style="position:absolute;left:1338px;top:159.19px;font-size:12px;line-height:14.40px;color:#e6e6e6;white-space:pre;">X</div><div style="position:absolute;right:435px;top:159.19px;font-size:12px;line-height:14.40px;color:#e6e6e6;white-space:pre;text-align:right;">0 m</div><div style="position:absolute;left:1338px;top:178.44px;font-size:12px;line-height:14.40px;color:#e6e6e6;white-space:pre;">Y</div><div style="position:absolute;right:435px;top:178.44px;font-size:12px;line-height:14.40px;color:#e6e6e6;white-space:pre;text-align:right;">0 m</div><div style="position:absolute;left:1338px;top:197.94px;font-size:12px;line-height:14.40px;color:#e6e6e6;white-space:pre;">Z</div><div style="position:absolute;right:435px;top:197.94px;font-size:12px;line-height:14.40px;color:#e6e6e6;white-space:pre;text-align:right;">0 m</div><div style="position:absolute;left:1338px;top:241.19px;font-size:12px;line-height:14.40px;color:#e6e6e6;white-space:pre;">X</div><div style="position:absolute;right:435px;top:241.19px;font-size:12px;line-height:14.40px;color:#e6e6e6;white-space:pre;text-align:right;">0°</div><div style="position:absolute;left:1338px;top:260.44px;font-size:12px;line-height:14.40px;color:#e6e6e6;white-space:pre;">Y</div><div style="position:absolute;right:435px;top:260.44px;font-size:12px;line-height:14.40px;color:#e6e6e6;white-space:pre;text-align:right;">0°</div><div style="position:absolute;left:1338px;top:279.94px;font-size:12px;line-height:14.40px;color:#e6e6e6;white-space:pre;">Z</div><div style="position:absolute;right:435px;top:279.94px;font-size:12px;line-height:14.40px;color:#e6e6e6;white-space:pre;text-align:right;">0°</div><div style="position:absolute;left:1338px;top:344.94px;font-size:12px;line-height:14.40px;color:#e6e6e6;white-space:pre;">X</div><div style="position:absolute;right:435px;top:344.94px;font-size:12px;line-height:14.40px;color:#e6e6e6;white-space:pre;text-align:right;">1.000</div><div style="position:absolute;left:1338px;top:364.44px;font-size:12px;line-height:14.40px;color:#e6e6e6;white-space:pre;">Y</div><div style="position:absolute;right:435px;top:364.44px;font-size:12px;line-height:14.40px;color:#e6e6e6;white-space:pre;text-align:right;">1.000</div><div style="position:absolute;left:1338px;top:384.44px;font-size:12px;line-height:14.40px;color:#e6e6e6;white-space:pre;">Z</div><div style="position:absolute;right:435px;top:384.44px;font-size:12px;line-height:14.40px;color:#e6e6e6;white-space:pre;text-align:right;">1.000</div><div style="position:absolute;left:1338px;top:426.94px;font-size:12px;line-height:14.40px;color:#e6e6e6;white-space:pre;">X</div><div style="position:absolute;right:383px;top:426.94px;font-size:12px;line-height:14.40px;color:#e6e6e6;white-space:pre;text-align:right;">8 m</div><div style="position:absolute;left:1338px;top:446.44px;font-size:12px;line-height:14.40px;color:#e6e6e6;white-space:pre;">Y</div><div style="position:absolute;right:383px;top:446.44px;font-size:12px;line-height:14.40px;color:#e6e6e6;white-space:pre;text-align:right;">8 m</div><div style="position:absolute;left:1338px;top:466.44px;font-size:12px;line-height:14.40px;color:#e6e6e6;white-space:pre;">Z</div><div style="position:absolute;right:383px;top:466.44px;font-size:12px;line-height:14.40px;color:#e6e6e6;white-space:pre;text-align:right;">2 m</div><div style="position:absolute;left:1330px;top:303.14px;font-size:12px;line-height:14.40px;color:#e6e6e6;white-space:pre;">XYZ Euler</div><div style="position:absolute;left:1533.5px;top:119px;width:80px;height:14px;line-height:14px;text-align:center;font-size:12px;color:#e6e6e6;transform:rotate(90deg);white-space:pre">Item</div><div style="position:absolute;left:1533.5px;top:164px;width:80px;height:14px;line-height:14px;text-align:center;font-size:12px;color:#e6e6e6;transform:rotate(90deg);white-space:pre">Tool</div><div style="position:absolute;left:1533.5px;top:209px;width:80px;height:14px;line-height:14px;text-align:center;font-size:12px;color:#e6e6e6;transform:rotate(90deg);white-space:pre">View</div><div style="position:absolute;left:1533.5px;top:252.5px;width:80px;height:14px;line-height:14px;text-align:center;font-size:12px;color:#e6e6e6;transform:rotate(90deg);white-space:pre">Edit</div><svg style="position:absolute;left:0px;top:0px;" width="1919" height="400" viewBox="0 0 1919 400"><defs><clipPath id="olc"><rect x="1588" y="50" width="331" height="321.5" rx="6"/></clipPath></defs><rect x="1588" y="50" width="331" height="321.5" rx="6" fill="#282828"/><g clip-path="url(#olc)"><rect x="1588" y="76" width="331" height="20" fill="#2b2b2b"/><rect x="1588" y="116" width="331" height="20" fill="#2b2b2b"/><rect x="1588" y="156" width="331" height="20" fill="#2b2b2b"/><rect x="1588" y="196" width="331" height="20" fill="#2b2b2b"/><rect x="1588" y="236" width="331" height="20" fill="#2b2b2b"/><rect x="1588" y="276" width="331" height="20" fill="#2b2b2b"/><rect x="1588" y="316" width="331" height="20" fill="#2b2b2b"/><rect x="1588" y="356" width="331" height="20" fill="#2b2b2b"/></g><rect x="1588.5" y="50.5" width="330" height="320.5" rx="6" fill="none" stroke="#353535" stroke-width="1"/><rect x="1588" y="116.5" width="331" height="19.5" fill="#334d80"/><rect x="1596.5" y="53" width="31" height="18.5" rx="4" fill="#282828" stroke="#363636" stroke-width="0.8"/><rect x="1600.5" y="55.5" width="4.5" height="2.5" fill="#e0e0e0"/><path d="M1601.5 58.5V68H1604" stroke="#e0e0e0" fill="none"/><rect x="1604" y="61" width="7" height="2.8" fill="#e0e0e0"/><rect x="1604" y="65.8" width="7" height="2.8" fill="#e0e0e0"/><path d="M1618.7 61.1L1621.5 63.9L1624.3 61.1" stroke="#d0d0d0" stroke-width="1.1" fill="none" stroke-linecap="round" stroke-linejoin="round"/><rect x="1633.5" y="53" width="31" height="18.5" rx="4" fill="#282828" stroke="#363636" stroke-width="0.8"/><path d="M1638 70V62M1638 70H1646M1640 68V60M1640 68H1648" stroke="#d8d8d8" fill="none" stroke-width="1"/><rect x="1642" y="55.5" width="8" height="10" fill="none" stroke="#e0e0e0" stroke-width="1.1"/><path d="M1642.5 65L1645.5 59L1648 62.5L1649.5 61V65Z" fill="#e0e0e0"/><path d="M1655.7 61.1L1658.5 63.9L1661.3 61.1" stroke="#d0d0d0" stroke-width="1.1" fill="none" stroke-linecap="round" stroke-linejoin="round"/><rect x="1683.5" y="53" width="118" height="18.5" rx="4" fill="#1d1d1d" stroke="#333" stroke-width="0.8"/><circle cx="1697" cy="60.5" r="4" fill="none" stroke="#d8d8d8" stroke-width="1.1"/><path d="M1694 63.5L1689.5 68" stroke="#d8d8d8" stroke-width="1.2"/><rect x="1855.5" y="53" width="31" height="18.5" rx="4" fill="#282828" stroke="#363636" stroke-width="0.8"/><path d="M1859 56H1871L1866.5 62V69L1863.5 67V62Z" fill="none" stroke="#e0e0e0" stroke-width="1.1" stroke-linejoin="round"/><path d="M1877.7 61.1L1880.5 63.9L1883.3 61.1" stroke="#d0d0d0" stroke-width="1.1" fill="none" stroke-linecap="round" stroke-linejoin="round"/><rect x="1892.5" y="53" width="19" height="18.5" rx="4" fill="#4a4a4a"/><path d="M1895.5 60H1906V70H1895.5Z M1895.5 63.5H1906" stroke="#e0e0e0" fill="none" stroke-width="1"/><rect x="1899" y="65.5" width="3.5" height="1.5" fill="#e0e0e0"/><circle cx="1906" cy="58.5" r="3.5" fill="#4a4a4a" stroke="#e0e0e0" stroke-width="0.9"/><path d="M1906 56.5V60.5M1904 58.5H1908" stroke="#e0e0e0" stroke-width="0.9"/><rect x="1611" y="79" width="14" height="3.5" fill="#e0e0e0"/><rect x="1612" y="84" width="12" height="8.5" fill="#e0e0e0"/><rect x="1616" y="86" width="4" height="1.3" fill="#282828"/><path d="M1614.5 104.5L1618.5 108.5L1622.5 104.5" stroke="#c8c8c8" stroke-width="1.1" fill="none" stroke-linecap="round" stroke-linejoin="round"/><rect x="1628.5" y="97.5" width="19" height="17" rx="4" fill="#3a3a3a" stroke="#5a5a5a" stroke-width="0.9"/><rect x="1631" y="99.5" width="14" height="3.5" fill="#e0e0e0"/><rect x="1632" y="104.5" width="12" height="8.5" fill="#e0e0e0"/><rect x="1636" y="106.5" width="4" height="1.3" fill="#3a3a3a"/><path d="M1855 101.5H1864.5V111H1855Z" fill="#e6e6e6"/><path d="M1857 106L1859.5 108.5L1863 103.5" stroke="#282828" stroke-width="1.4" fill="none"/><path d="M1874.5 106Q1880.5 99.5 1886.5 106Q1880.5 112.5 1874.5 106Z" fill="none" stroke="#e6e6e6" stroke-width="1.3"/><circle cx="1880.5" cy="106" r="2.6" fill="#e6e6e6"/><circle cx="1880.5" cy="106" r="1" fill="#282828"/><rect x="1894.0" y="102" width="13" height="9.5" rx="1" fill="#e6e6e6"/><rect x="1897.5" y="100" width="6" height="2.5" fill="#e6e6e6"/><circle cx="1900.5" cy="106.8" r="3.2" fill="#282828"/><circle cx="1900.5" cy="106.8" r="1.8" fill="#e6e6e6"/><circle cx="1900.5" cy="106.8" r="1" fill="#282828"/><path d="M1874.5 126Q1880.5 119.5 1886.5 126Q1880.5 132.5 1874.5 126Z" fill="none" stroke="#f0f0f0" stroke-width="1.3"/><circle cx="1880.5" cy="126" r="2.6" fill="#f0f0f0"/><circle cx="1880.5" cy="126" r="1" fill="#282828"/><rect x="1894.0" y="122" width="13" height="9.5" rx="1" fill="#f0f0f0"/><rect x="1897.5" y="120" width="6" height="2.5" fill="#f0f0f0"/><circle cx="1900.5" cy="126.8" r="3.2" fill="#334d80"/><circle cx="1900.5" cy="126.8" r="1.8" fill="#f0f0f0"/><circle cx="1900.5" cy="126.8" r="1" fill="#334d80"/><path d="M1634.5 124.5L1638.5 128.5L1642.5 124.5" stroke="#c8c8c8" stroke-width="1.1" fill="none" stroke-linecap="round" stroke-linejoin="round"/><rect x="1648.5" y="117.5" width="19" height="17.5" rx="4" fill="#4d6590" stroke="#6f86b0" stroke-width="0.8"/><path d="M1652.5 121.5H1664L1658.2 132Z" fill="none" stroke="#d98f45" stroke-width="2.6" stroke-linejoin="round"/><path d="M1617.5 121.5V150.5" stroke="#555" stroke-width="1"/><path d="M1672.5 141H1684L1678.3 151Z" fill="none" stroke="#2ec6a0" stroke-width="1.2"/><rect x="1671" y="139.5" width="3.2" height="3.2" fill="#282828" stroke="#2ec6a0" stroke-width="1"/><rect x="1682.5" y="139.5" width="3.2" height="3.2" fill="#282828" stroke="#2ec6a0" stroke-width="1"/><rect x="1676.8" y="149.5" width="3.2" height="3.2" fill="#282828" stroke="#2ec6a0" stroke-width="1"/></svg><div style="position:absolute;left:1709px;top:54.64px;font-size:12px;line-height:14.40px;color:#777;white-space:pre;">Search</div><div style="position:absolute;left:1632px;top:80.14px;font-size:12px;line-height:14.40px;color:#e6e6e6;white-space:pre;">Scene Collection</div><div style="position:absolute;left:1652px;top:100.14px;font-size:12px;line-height:14.40px;color:#e6e6e6;white-space:pre;">Collection</div><div style="position:absolute;left:1672px;top:120.14px;font-size:12px;line-height:14.40px;color:#f5a83c;white-space:pre;">low_poly_snoflake</div><div style="position:absolute;left:1692px;top:139.64px;font-size:12px;line-height:14.40px;color:#e6e6e6;white-space:pre;">Cube.003</div><svg style="position:absolute;left:0px;top:0px;" width="1919" height="1079" viewBox="0 0 1919 1079"><rect x="1588" y="375" width="331" height="681" rx="6" fill="#303030"/><rect x="1588.5" y="375.5" width="330" height="680" rx="6" fill="none" stroke="#3c3c3c" stroke-width="1"/><path d="M1589 399H1616V1055H1594A5 5 0 0 1 1589 1050Z" fill="#282828"/><rect x="1589" y="399" width="27" height="423" fill="#232323"/><rect x="1590" y="627" width="26" height="28" rx="4" fill="#303030"/><rect x="1588" y="435.5" width="28" height="1" fill="#2a2a2a"/><rect x="1588" y="584.5" width="28" height="1" fill="#2a2a2a"/><rect x="1588" y="620.5" width="28" height="1" fill="#2a2a2a"/><rect x="1596.5" y="378" width="31" height="18.5" rx="4" fill="#282828" stroke="#363636" stroke-width="0.8"/><rect x="1601" y="381.5" width="10" height="4.5" rx="2.2" fill="#e0e0e0"/><rect x="1601" y="388" width="10" height="4.5" rx="2.2" fill="#e0e0e0"/><rect x="1602" y="382.5" width="4" height="2.5" rx="1.2" fill="#282828"/><rect x="1606" y="389" width="4" height="2.5" rx="1.2" fill="#282828"/><path d="M1618.7 386.1L1621.5 388.9L1624.3 386.1" stroke="#d0d0d0" stroke-width="1.1" fill="none" stroke-linecap="round" stroke-linejoin="round"/><rect x="1695.5" y="378" width="118" height="18.5" rx="4" fill="#1d1d1d" stroke="#333" stroke-width="0.8"/><circle cx="1709" cy="385.5" r="4" fill="none" stroke="#d8d8d8" stroke-width="1.1"/><path d="M1706 388.5L1701.5 393" stroke="#d8d8d8" stroke-width="1.2"/><rect x="1892.5" y="378" width="19" height="18.5" rx="4" fill="#282828" stroke="#363636" stroke-width="0.8"/><path d="M1899.2 386.1L1902 388.9L1904.8 386.1" stroke="#d0d0d0" stroke-width="1.1" fill="none" stroke-linecap="round" stroke-linejoin="round"/><path d="M1598.2 415V421" stroke="#cfcfcf" stroke-width="1.3"/><path d="M1596 422.5H1600.5V426.5A2.2 2.2 0 0 1 1596 426.5Z" fill="#cfcfcf"/><path d="M1607 428.5V420.5" stroke="#cfcfcf" stroke-width="2"/><path d="M1604 415V417.5A3 3 0 0 0 1610 417.5V415" stroke="#cfcfcf" stroke-width="1.8" fill="none"/><rect x="1596.5" y="453.5" width="14" height="10" rx="1" fill="none" stroke="#cfcfcf" stroke-width="1.3"/><path d="M1599 451.5H1604M1598.5 456.5H1605M1598.5 459H1605M1598.5 461.5H1605" stroke="#cfcfcf" stroke-width="1"/><rect x="1607" y="455.5" width="2" height="2" fill="#cfcfcf"/><rect x="1607" y="459" width="2" height="2" fill="#cfcfcf"/><path d="M1607 451.5H1609" stroke="#cfcfcf" stroke-width="0.8"/><path d="M1596 486V481.5A2 2 0 0 1 1598 479.5H1609A2 2 0 0 1 1611 481.5V486Z" fill="#cfcfcf"/><rect x="1599" y="484.5" width="9" height="9.5" fill="#232323" stroke="#cfcfcf" stroke-width="1.2"/><path d="M1600.5 492.5L1603.5 488L1606.5 492.5Z" fill="#cfcfcf"/><circle cx="1605.5" cy="487" r="0.9" fill="#cfcfcf"/><path d="M1596.5 509.5V521H1607M1598.5 507.5V519H1609" stroke="#cfcfcf" fill="none" stroke-width="0.9"/><rect x="1601" y="505.5" width="9.5" height="11" fill="none" stroke="#cfcfcf" stroke-width="1.1"/><path d="M1601.5 516L1604.5 510L1607 513.5L1608.5 512V516Z" fill="#cfcfcf"/><circle cx="1608" cy="508" r="1" fill="#cfcfcf"/><path d="M1596 546.5A3.2 3.2 0 0 0 1602 547.5L1600 536Z" fill="#cfcfcf"/><circle cx="1608.5" cy="536.5" r="2" fill="#cfcfcf"/><circle cx="1606" cy="544.5" r="4" fill="#232323" stroke="#cfcfcf" stroke-width="1.2"/><path d="M1604.3 543.3A2 2 0 0 1 1606.5 542" stroke="#cfcfcf" stroke-width="0.8" fill="none"/><circle cx="1603.3" cy="570" r="6.3" fill="none" stroke="#c85a6a" stroke-width="1.3"/><path d="M1598.5 567.5Q1600.5 565 1603 566.5L1604.5 569L1602 571L1603 574.5L1600.5 575Q1597.5 571 1598.5 567.5Z M1605 564.5L1607.5 565L1609 568L1606.5 568.5Z" fill="#c85a6a"/><path d="M1596.5 577L1610.5 563" stroke="#c85a6a" stroke-width="1.1"/><path d="M1596.5 599.5H1610V603H1596.5Z M1597.5 604.5H1609V612H1597.5Z" fill="none" stroke="#cfcfcf" stroke-width="1.2"/><rect x="1601.5" y="606.5" width="3.5" height="1.4" fill="#cfcfcf"/><path d="M1597.5 639V635.5H1601M1605 635.5H1608.5V639M1608.5 644V647.5H1605M1601 647.5H1597.5V644" stroke="#e39b55" stroke-width="1.2" fill="none"/><rect x="1599.5" y="637.5" width="7" height="8" fill="#eba25c"/><path d="M1597.5 675.5L1604 669" stroke="#5b86cc" stroke-width="2.4" stroke-linecap="round"/><path d="M1603 669.5A4.3 4.3 0 0 1 1606.5 663L1605.5 666.2L1607.5 668.2L1610.5 667A4.3 4.3 0 0 1 1603 669.5Z" fill="#5b86cc" stroke="#5b86cc" stroke-width="1.2" stroke-linejoin="round"/><path d="M1598.5 693V703.5M1598.5 693H1609M1598.5 693L1608.5 703" stroke="#5b86cc" stroke-width="1.1"/><circle cx="1598.5" cy="693" r="2.4" fill="#5b86cc"/><circle cx="1609" cy="693" r="1.5" fill="#5b86cc"/><circle cx="1598.5" cy="703.5" r="1.5" fill="#5b86cc"/><circle cx="1608.5" cy="703" r="1.8" fill="#5b86cc"/><path d="M1608 728A5.8 5.8 0 1 1 1604 719.8" stroke="#5b86cc" stroke-width="1.2" fill="none"/><circle cx="1603" cy="725.5" r="2.8" fill="#5b86cc"/><circle cx="1608.3" cy="720.8" r="1.8" fill="#5b86cc"/><path d="M1597.5 758A5 5 0 0 0 1602.5 760.5L1609.5 752A3 3 0 0 0 1605.5 747.5L1598 751.5A5 5 0 0 0 1597.5 758Z" fill="none" stroke="#5b86cc" stroke-width="1.2"/><circle cx="1601.5" cy="755" r="2.3" fill="none" stroke="#5b86cc" stroke-width="1.1"/><circle cx="1606.5" cy="750.5" r="0.9" fill="#5b86cc"/><path d="M1597.5 776.5H1608.5L1603 786.5Z" fill="none" stroke="#2ec6a0" stroke-width="1.2"/><rect x="1595.8" y="774.8" width="3.4" height="3.4" fill="#232323" stroke="#2ec6a0" stroke-width="1"/><rect x="1606.8" y="774.8" width="3.4" height="3.4" fill="#232323" stroke="#2ec6a0" stroke-width="1"/><rect x="1601.3" y="784.8" width="3.4" height="3.4" fill="#232323" stroke="#2ec6a0" stroke-width="1"/><circle cx="1603" cy="809.5" r="6.8" fill="#c2525f"/><path d="M1603 809.5H1596.2A6.8 6.8 0 0 0 1603 816.3Z" fill="#1a1a1a"/><path d="M1603 809.5H1609.8A6.8 6.8 0 0 0 1603 802.7Z" fill="#1a1a1a"/><circle cx="1603" cy="809.5" r="6.8" fill="none" stroke="#c2525f" stroke-width="0.8"/><path d="M1627.5 415V412H1630.5M1637.5 412H1640.5V415M1640.5 422V425H1637.5M1630.5 425H1627.5V422" stroke="#d8d8d8" stroke-width="1.1" fill="none"/><rect x="1630.5" y="415" width="7" height="7" fill="#e6e6e6"/><path d="M1895 425L1899.5 420.5M1897 417.5L1903 423.5M1899 418.5L1903 412.5L1907.5 417L1901.5 421" stroke="#9a9a9a" stroke-width="1" fill="none"/><rect x="1625" y="444.5" width="286.5" height="19" rx="4" fill="#1d1d1d" stroke="#2a2a2a" stroke-width="0.8"/><rect x="1625.5" y="445" width="30.5" height="18" rx="4" fill="#282828"/><rect x="1650" y="445" width="6" height="18" fill="#282828"/><path d="M1629.5 451V448.5H1632M1638 448.5H1640.5V451M1640.5 457V459.5H1638M1632 459.5H1629.5V457" stroke="#d8d8d8" stroke-width="1.1" fill="none"/><rect x="1632" y="451" width="6" height="6" fill="#e6e6e6"/><path d="M1646.5 452.75L1649 455.25L1651.5 452.75" stroke="#d0d0d0" stroke-width="1" fill="none" stroke-linecap="round" stroke-linejoin="round"/><rect x="1624.5" y="474" width="287.5" height="280.5" rx="5" fill="#3d3d3d"/><path d="M1634.3 485.9L1637.5 489.1L1640.7 485.9" stroke="#cfcfcf" stroke-width="1.1" fill="none" stroke-linecap="round" stroke-linejoin="round"/><rect x="1894.5" y="485.5" width="1.3" height="1.3" fill="#8a8a8a"/><rect x="1894.5" y="488.5" width="1.3" height="1.3" fill="#8a8a8a"/><rect x="1897.5" y="485.5" width="1.3" height="1.3" fill="#8a8a8a"/><rect x="1897.5" y="488.5" width="1.3" height="1.3" fill="#8a8a8a"/><rect x="1900.5" y="485.5" width="1.3" height="1.3" fill="#8a8a8a"/><rect x="1900.5" y="488.5" width="1.3" height="1.3" fill="#8a8a8a"/><rect x="1903.5" y="485.5" width="1.3" height="1.3" fill="#8a8a8a"/><rect x="1903.5" y="488.5" width="1.3" height="1.3" fill="#8a8a8a"/><rect x="1738.5" y="508.5" width="124.5" height="57.5" rx="4" fill="#545454"/><rect x="1738.5" y="527" width="124.5" height="1" fill="#3d3d3d"/><rect x="1738.5" y="546" width="124.5" height="1" fill="#3d3d3d"/><rect x="1738.5" y="573" width="124.5" height="58" rx="4" fill="#545454"/><rect x="1738.5" y="591" width="124.5" height="1" fill="#3d3d3d"/><rect x="1738.5" y="611" width="124.5" height="1" fill="#3d3d3d"/><rect x="1738.5" y="663.5" width="124.5" height="57.5" rx="4" fill="#545454"/><rect x="1738.5" y="682" width="124.5" height="1" fill="#3d3d3d"/><rect x="1738.5" y="701.5" width="124.5" height="1" fill="#3d3d3d"/><rect x="1738.5" y="638" width="124.5" height="18.5" rx="4" fill="#282828"/><path d="M1854.2 646.1L1857 648.9L1859.8 646.1" stroke="#d0d0d0" stroke-width="1.1" fill="none" stroke-linecap="round" stroke-linejoin="round"/><path d="M1867.2 518.05V515.15A2.9 2.9 0 0 1 1873 515.15V516.15" fill="none" stroke="#bdbdbd" stroke-width="1"/><rect x="1872" y="516.35" width="8.4" height="6.2" fill="none" stroke="#bdbdbd" stroke-width="1"/><rect x="1875.5" y="518.75" width="1.4" height="1.8" fill="#bdbdbd"/><circle cx="1893.5" cy="517.75" r="1.8" fill="#e0e0e0"/><path d="M1867.2 537.3V534.4A2.9 2.9 0 0 1 1873 534.4V535.4" fill="none" stroke="#bdbdbd" stroke-width="1"/><rect x="1872" y="535.6" width="8.4" height="6.2" fill="none" stroke="#bdbdbd" stroke-width="1"/><rect x="1875.5" y="538.0" width="1.4" height="1.8" fill="#bdbdbd"/><circle cx="1893.5" cy="537.0" r="1.8" fill="#e0e0e0"/><path d="M1867.2 556.8V553.9A2.9 2.9 0 0 1 1873 553.9V554.9" fill="none" stroke="#bdbdbd" stroke-width="1"/><rect x="1872" y="555.1" width="8.4" height="6.2" fill="none" stroke="#bdbdbd" stroke-width="1"/><rect x="1875.5" y="557.5" width="1.4" height="1.8" fill="#bdbdbd"/><circle cx="1893.5" cy="556.5" r="1.8" fill="#e0e0e0"/><path d="M1867.2 582.3V579.4A2.9 2.9 0 0 1 1873 579.4V580.4" fill="none" stroke="#bdbdbd" stroke-width="1"/><rect x="1872" y="580.6" width="8.4" height="6.2" fill="none" stroke="#bdbdbd" stroke-width="1"/><rect x="1875.5" y="583.0" width="1.4" height="1.8" fill="#bdbdbd"/><circle cx="1893.5" cy="582.0" r="1.8" fill="#e0e0e0"/><path d="M1867.2 601.8V598.9A2.9 2.9 0 0 1 1873 598.9V599.9" fill="none" stroke="#bdbdbd" stroke-width="1"/><rect x="1872" y="600.1" width="8.4" height="6.2" fill="none" stroke="#bdbdbd" stroke-width="1"/><rect x="1875.5" y="602.5" width="1.4" height="1.8" fill="#bdbdbd"/><circle cx="1893.5" cy="601.5" r="1.8" fill="#e0e0e0"/><path d="M1867.2 621.8V618.9A2.9 2.9 0 0 1 1873 618.9V619.9" fill="none" stroke="#bdbdbd" stroke-width="1"/><rect x="1872" y="620.1" width="8.4" height="6.2" fill="none" stroke="#bdbdbd" stroke-width="1"/><rect x="1875.5" y="622.5" width="1.4" height="1.8" fill="#bdbdbd"/><circle cx="1893.5" cy="621.5" r="1.8" fill="#e0e0e0"/><path d="M1867.2 673.05V670.15A2.9 2.9 0 0 1 1873 670.15V671.15" fill="none" stroke="#bdbdbd" stroke-width="1"/><rect x="1872" y="671.35" width="8.4" height="6.2" fill="none" stroke="#bdbdbd" stroke-width="1"/><rect x="1875.5" y="673.75" width="1.4" height="1.8" fill="#bdbdbd"/><circle cx="1893.5" cy="672.75" r="1.8" fill="#e0e0e0"/><path d="M1867.2 692.55V689.65A2.9 2.9 0 0 1 1873 689.65V690.65" fill="none" stroke="#bdbdbd" stroke-width="1"/><rect x="1872" y="690.85" width="8.4" height="6.2" fill="none" stroke="#bdbdbd" stroke-width="1"/><rect x="1875.5" y="693.25" width="1.4" height="1.8" fill="#bdbdbd"/><circle cx="1893.5" cy="692.25" r="1.8" fill="#e0e0e0"/><path d="M1867.2 712.05V709.15A2.9 2.9 0 0 1 1873 709.15V710.15" fill="none" stroke="#bdbdbd" stroke-width="1"/><rect x="1872" y="710.35" width="8.4" height="6.2" fill="none" stroke="#bdbdbd" stroke-width="1"/><rect x="1875.5" y="712.75" width="1.4" height="1.8" fill="#bdbdbd"/><circle cx="1893.5" cy="711.75" r="1.8" fill="#e0e0e0"/><circle cx="1893.5" cy="647" r="1.8" fill="#e0e0e0"/><path d="M1649.75 739.0L1653.25 742.5L1649.75 746.0" stroke="#cfcfcf" stroke-width="1.1" fill="none" stroke-linecap="round" stroke-linejoin="round"/><rect x="1624.5" y="757.5" width="287.5" height="24.5" rx="5" fill="#3d3d3d"/><path d="M1635.75 766.0L1639.25 769.5L1635.75 773.0" stroke="#cfcfcf" stroke-width="1.1" fill="none" stroke-linecap="round" stroke-linejoin="round"/><rect x="1894.5" y="768.0" width="1.3" height="1.3" fill="#8a8a8a"/><rect x="1894.5" y="771.0" width="1.3" height="1.3" fill="#8a8a8a"/><rect x="1897.5" y="768.0" width="1.3" height="1.3" fill="#8a8a8a"/><rect x="1897.5" y="771.0" width="1.3" height="1.3" fill="#8a8a8a"/><rect x="1900.5" y="768.0" width="1.3" height="1.3" fill="#8a8a8a"/><rect x="1900.5" y="771.0" width="1.3" height="1.3" fill="#8a8a8a"/><rect x="1903.5" y="768.0" width="1.3" height="1.3" fill="#8a8a8a"/><rect x="1903.5" y="771.0" width="1.3" height="1.3" fill="#8a8a8a"/><rect x="1624.5" y="784.5" width="287.5" height="24.5" rx="5" fill="#3d3d3d"/><path d="M1635.75 793.0L1639.25 796.5L1635.75 800.0" stroke="#cfcfcf" stroke-width="1.1" fill="none" stroke-linecap="round" stroke-linejoin="round"/><rect x="1894.5" y="795.0" width="1.3" height="1.3" fill="#8a8a8a"/><rect x="1894.5" y="798.0" width="1.3" height="1.3" fill="#8a8a8a"/><rect x="1897.5" y="795.0" width="1.3" height="1.3" fill="#8a8a8a"/><rect x="1897.5" y="798.0" width="1.3" height="1.3" fill="#8a8a8a"/><rect x="1900.5" y="795.0" width="1.3" height="1.3" fill="#8a8a8a"/><rect x="1900.5" y="798.0" width="1.3" height="1.3" fill="#8a8a8a"/><rect x="1903.5" y="795.0" width="1.3" height="1.3" fill="#8a8a8a"/><rect x="1903.5" y="798.0" width="1.3" height="1.3" fill="#8a8a8a"/><rect x="1624.5" y="811.5" width="287.5" height="24.5" rx="5" fill="#3d3d3d"/><path d="M1635.75 820.0L1639.25 823.5L1635.75 827.0" stroke="#cfcfcf" stroke-width="1.1" fill="none" stroke-linecap="round" stroke-linejoin="round"/><rect x="1894.5" y="822.0" width="1.3" height="1.3" fill="#8a8a8a"/><rect x="1894.5" y="825.0" width="1.3" height="1.3" fill="#8a8a8a"/><rect x="1897.5" y="822.0" width="1.3" height="1.3" fill="#8a8a8a"/><rect x="1897.5" y="825.0" width="1.3" height="1.3" fill="#8a8a8a"/><rect x="1900.5" y="822.0" width="1.3" height="1.3" fill="#8a8a8a"/><rect x="1900.5" y="825.0" width="1.3" height="1.3" fill="#8a8a8a"/><rect x="1903.5" y="822.0" width="1.3" height="1.3" fill="#8a8a8a"/><rect x="1903.5" y="825.0" width="1.3" height="1.3" fill="#8a8a8a"/><rect x="1624.5" y="838.5" width="287.5" height="24.5" rx="5" fill="#3d3d3d"/><path d="M1635.75 847.0L1639.25 850.5L1635.75 854.0" stroke="#cfcfcf" stroke-width="1.1" fill="none" stroke-linecap="round" stroke-linejoin="round"/><rect x="1894.5" y="849.0" width="1.3" height="1.3" fill="#8a8a8a"/><rect x="1894.5" y="852.0" width="1.3" height="1.3" fill="#8a8a8a"/><rect x="1897.5" y="849.0" width="1.3" height="1.3" fill="#8a8a8a"/><rect x="1897.5" y="852.0" width="1.3" height="1.3" fill="#8a8a8a"/><rect x="1900.5" y="849.0" width="1.3" height="1.3" fill="#8a8a8a"/><rect x="1900.5" y="852.0" width="1.3" height="1.3" fill="#8a8a8a"/><rect x="1903.5" y="849.0" width="1.3" height="1.3" fill="#8a8a8a"/><rect x="1903.5" y="852.0" width="1.3" height="1.3" fill="#8a8a8a"/><rect x="1624.5" y="865.5" width="287.5" height="24.5" rx="5" fill="#3d3d3d"/><path d="M1635.75 874.0L1639.25 877.5L1635.75 881.0" stroke="#cfcfcf" stroke-width="1.1" fill="none" stroke-linecap="round" stroke-linejoin="round"/><rect x="1894.5" y="876.0" width="1.3" height="1.3" fill="#8a8a8a"/><rect x="1894.5" y="879.0" width="1.3" height="1.3" fill="#8a8a8a"/><rect x="1897.5" y="876.0" width="1.3" height="1.3" fill="#8a8a8a"/><rect x="1897.5" y="879.0" width="1.3" height="1.3" fill="#8a8a8a"/><rect x="1900.5" y="876.0" width="1.3" height="1.3" fill="#8a8a8a"/><rect x="1900.5" y="879.0" width="1.3" height="1.3" fill="#8a8a8a"/><rect x="1903.5" y="876.0" width="1.3" height="1.3" fill="#8a8a8a"/><rect x="1903.5" y="879.0" width="1.3" height="1.3" fill="#8a8a8a"/><rect x="1624.5" y="892.5" width="287.5" height="24.5" rx="5" fill="#3d3d3d"/><path d="M1635.75 901.0L1639.25 904.5L1635.75 908.0" stroke="#cfcfcf" stroke-width="1.1" fill="none" stroke-linecap="round" stroke-linejoin="round"/><rect x="1894.5" y="903.0" width="1.3" height="1.3" fill="#8a8a8a"/><rect x="1894.5" y="906.0" width="1.3" height="1.3" fill="#8a8a8a"/><rect x="1897.5" y="903.0" width="1.3" height="1.3" fill="#8a8a8a"/><rect x="1897.5" y="906.0" width="1.3" height="1.3" fill="#8a8a8a"/><rect x="1900.5" y="903.0" width="1.3" height="1.3" fill="#8a8a8a"/><rect x="1900.5" y="906.0" width="1.3" height="1.3" fill="#8a8a8a"/><rect x="1903.5" y="903.0" width="1.3" height="1.3" fill="#8a8a8a"/><rect x="1903.5" y="906.0" width="1.3" height="1.3" fill="#8a8a8a"/><rect x="1624.5" y="919.5" width="287.5" height="24.5" rx="5" fill="#3d3d3d"/><path d="M1635.75 928.0L1639.25 931.5L1635.75 935.0" stroke="#cfcfcf" stroke-width="1.1" fill="none" stroke-linecap="round" stroke-linejoin="round"/><rect x="1894.5" y="930.0" width="1.3" height="1.3" fill="#8a8a8a"/><rect x="1894.5" y="933.0" width="1.3" height="1.3" fill="#8a8a8a"/><rect x="1897.5" y="930.0" width="1.3" height="1.3" fill="#8a8a8a"/><rect x="1897.5" y="933.0" width="1.3" height="1.3" fill="#8a8a8a"/><rect x="1900.5" y="930.0" width="1.3" height="1.3" fill="#8a8a8a"/><rect x="1900.5" y="933.0" width="1.3" height="1.3" fill="#8a8a8a"/><rect x="1903.5" y="930.0" width="1.3" height="1.3" fill="#8a8a8a"/><rect x="1903.5" y="933.0" width="1.3" height="1.3" fill="#8a8a8a"/><rect x="1624.5" y="946.5" width="287.5" height="24.5" rx="5" fill="#3d3d3d"/><path d="M1635.75 955.0L1639.25 958.5L1635.75 962.0" stroke="#cfcfcf" stroke-width="1.1" fill="none" stroke-linecap="round" stroke-linejoin="round"/><rect x="1894.5" y="957.0" width="1.3" height="1.3" fill="#8a8a8a"/><rect x="1894.5" y="960.0" width="1.3" height="1.3" fill="#8a8a8a"/><rect x="1897.5" y="957.0" width="1.3" height="1.3" fill="#8a8a8a"/><rect x="1897.5" y="960.0" width="1.3" height="1.3" fill="#8a8a8a"/><rect x="1900.5" y="957.0" width="1.3" height="1.3" fill="#8a8a8a"/><rect x="1900.5" y="960.0" width="1.3" height="1.3" fill="#8a8a8a"/><rect x="1903.5" y="957.0" width="1.3" height="1.3" fill="#8a8a8a"/><rect x="1903.5" y="960.0" width="1.3" height="1.3" fill="#8a8a8a"/><rect x="1624.5" y="973.5" width="287.5" height="24.5" rx="5" fill="#3d3d3d"/><path d="M1635.75 982.0L1639.25 985.5L1635.75 989.0" stroke="#cfcfcf" stroke-width="1.1" fill="none" stroke-linecap="round" stroke-linejoin="round"/><rect x="1894.5" y="984.0" width="1.3" height="1.3" fill="#8a8a8a"/><rect x="1894.5" y="987.0" width="1.3" height="1.3" fill="#8a8a8a"/><rect x="1897.5" y="984.0" width="1.3" height="1.3" fill="#8a8a8a"/><rect x="1897.5" y="987.0" width="1.3" height="1.3" fill="#8a8a8a"/><rect x="1900.5" y="984.0" width="1.3" height="1.3" fill="#8a8a8a"/><rect x="1900.5" y="987.0" width="1.3" height="1.3" fill="#8a8a8a"/><rect x="1903.5" y="984.0" width="1.3" height="1.3" fill="#8a8a8a"/><rect x="1903.5" y="987.0" width="1.3" height="1.3" fill="#8a8a8a"/><rect x="1624.5" y="1000.5" width="287.5" height="24.5" rx="5" fill="#3d3d3d"/><path d="M1635.75 1009.0L1639.25 1012.5L1635.75 1016.0" stroke="#cfcfcf" stroke-width="1.1" fill="none" stroke-linecap="round" stroke-linejoin="round"/><rect x="1894.5" y="1011.0" width="1.3" height="1.3" fill="#8a8a8a"/><rect x="1894.5" y="1014.0" width="1.3" height="1.3" fill="#8a8a8a"/><rect x="1897.5" y="1011.0" width="1.3" height="1.3" fill="#8a8a8a"/><rect x="1897.5" y="1014.0" width="1.3" height="1.3" fill="#8a8a8a"/><rect x="1900.5" y="1011.0" width="1.3" height="1.3" fill="#8a8a8a"/><rect x="1900.5" y="1014.0" width="1.3" height="1.3" fill="#8a8a8a"/><rect x="1903.5" y="1011.0" width="1.3" height="1.3" fill="#8a8a8a"/><rect x="1903.5" y="1014.0" width="1.3" height="1.3" fill="#8a8a8a"/></svg><div style="position:absolute;left:1650px;top:410.64px;font-size:12px;line-height:14.40px;color:#e6e6e6;white-space:pre;">low_poly_snoflake</div><div style="position:absolute;left:1662.5px;top:446.64px;font-size:12px;line-height:14.40px;color:#e6e6e6;white-space:pre;">low_poly_snoflake</div><div style="position:absolute;left:1721px;top:380.14px;font-size:12px;line-height:14.40px;color:#777;white-space:pre;">Search</div><div style="position:absolute;left:1647px;top:479.64px;font-size:12px;line-height:14.40px;color:#e6e6e6;white-space:pre;">Transform</div><div style="position:absolute;right:192px;top:510.69px;font-size:12px;line-height:14.40px;color:#e6e6e6;white-space:pre;text-align:right;">Location X</div><div style="position:absolute;left:1600.75px;width:400px;top:510.69px;font-size:12px;line-height:14.40px;color:#e6e6e6;white-space:pre;text-align:center;">0 m</div><div style="position:absolute;right:192px;top:529.94px;font-size:12px;line-height:14.40px;color:#e6e6e6;white-space:pre;text-align:right;">Y</div><div style="position:absolute;left:1600.75px;width:400px;top:529.94px;font-size:12px;line-height:14.40px;color:#e6e6e6;white-space:pre;text-align:center;">0 m</div><div style="position:absolute;right:192px;top:549.44px;font-size:12px;line-height:14.40px;color:#e6e6e6;white-space:pre;text-align:right;">Z</div><div style="position:absolute;left:1600.75px;width:400px;top:549.44px;font-size:12px;line-height:14.40px;color:#e6e6e6;white-space:pre;text-align:center;">0 m</div><div style="position:absolute;right:192px;top:574.94px;font-size:12px;line-height:14.40px;color:#e6e6e6;white-space:pre;text-align:right;">Rotation X</div><div style="position:absolute;left:1600.75px;width:400px;top:574.94px;font-size:12px;line-height:14.40px;color:#e6e6e6;white-space:pre;text-align:center;">0°</div><div style="position:absolute;right:192px;top:594.44px;font-size:12px;line-height:14.40px;color:#e6e6e6;white-space:pre;text-align:right;">Y</div><div style="position:absolute;left:1600.75px;width:400px;top:594.44px;font-size:12px;line-height:14.40px;color:#e6e6e6;white-space:pre;text-align:center;">0°</div><div style="position:absolute;right:192px;top:614.44px;font-size:12px;line-height:14.40px;color:#e6e6e6;white-space:pre;text-align:right;">Z</div><div style="position:absolute;left:1600.75px;width:400px;top:614.44px;font-size:12px;line-height:14.40px;color:#e6e6e6;white-space:pre;text-align:center;">0°</div><div style="position:absolute;right:192px;top:665.69px;font-size:12px;line-height:14.40px;color:#e6e6e6;white-space:pre;text-align:right;">Scale X</div><div style="position:absolute;left:1600.75px;width:400px;top:665.69px;font-size:12px;line-height:14.40px;color:#e6e6e6;white-space:pre;text-align:center;">1.000</div><div style="position:absolute;right:192px;top:685.19px;font-size:12px;line-height:14.40px;color:#e6e6e6;white-space:pre;text-align:right;">Y</div><div style="position:absolute;left:1600.75px;width:400px;top:685.19px;font-size:12px;line-height:14.40px;color:#e6e6e6;white-space:pre;text-align:center;">1.000</div><div style="position:absolute;right:192px;top:704.69px;font-size:12px;line-height:14.40px;color:#e6e6e6;white-space:pre;text-align:right;">Z</div><div style="position:absolute;left:1600.75px;width:400px;top:704.69px;font-size:12px;line-height:14.40px;color:#e6e6e6;white-space:pre;text-align:center;">1.000</div><div style="position:absolute;right:192px;top:640.14px;font-size:12px;line-height:14.40px;color:#e6e6e6;white-space:pre;text-align:right;">Mode</div><div style="position:absolute;left:1745px;top:640.14px;font-size:12px;line-height:14.40px;color:#e6e6e6;white-space:pre;">XYZ Euler</div><div style="position:absolute;left:1660px;top:735.64px;font-size:12px;line-height:14.40px;color:#e6e6e6;white-space:pre;">Delta Transform</div><div style="position:absolute;left:1646px;top:762.64px;font-size:12px;line-height:14.40px;color:#e6e6e6;white-space:pre;">Relations</div><div style="position:absolute;left:1646px;top:789.64px;font-size:12px;line-height:14.40px;color:#e6e6e6;white-space:pre;">Collections</div><div style="position:absolute;left:1646px;top:816.64px;font-size:12px;line-height:14.40px;color:#e6e6e6;white-space:pre;">Instancing</div><div style="position:absolute;left:1646px;top:843.64px;font-size:12px;line-height:14.40px;color:#e6e6e6;white-space:pre;">Motion Paths</div><div style="position:absolute;left:1646px;top:870.64px;font-size:12px;line-height:14.40px;color:#e6e6e6;white-space:pre;">Shading</div><div style="position:absolute;left:1646px;top:897.64px;font-size:12px;line-height:14.40px;color:#e6e6e6;white-space:pre;">Visibility</div><div style="position:absolute;left:1646px;top:924.64px;font-size:12px;line-height:14.40px;color:#e6e6e6;white-space:pre;">Viewport Display</div><div style="position:absolute;left:1646px;top:951.64px;font-size:12px;line-height:14.40px;color:#e6e6e6;white-space:pre;">Line Art</div><div style="position:absolute;left:1646px;top:978.64px;font-size:12px;line-height:14.40px;color:#e6e6e6;white-space:pre;">Animation</div><div style="position:absolute;left:1646px;top:1005.64px;font-size:12px;line-height:14.40px;color:#e6e6e6;white-space:pre;">Custom Properties</div><svg style="position:absolute;left:0px;top:0px;" width="1919" height="1079" viewBox="0 0 1919 1079"><rect x="1" y="982" width="1584" height="75" rx="6" fill="#1d1d1d"/><path d="M7 982H1578A6 6 0 0 1 1584 988V1007H1V988A6 6 0 0 1 7 982Z" fill="#303030"/><rect x="9" y="985.5" width="30" height="18.5" rx="4" fill="#282828" stroke="#3a3a3a" stroke-width="0.8"/><circle cx="20" cy="994.7" r="6.5" fill="#e6e6e6"/><path d="M21.5 990.5L18.5 994.7L21.5 999" stroke="#282828" stroke-width="1.8" fill="none" stroke-linecap="round"/><path d="M30.2 993.6L33 996.4L35.8 993.6" stroke="#d0d0d0" stroke-width="1.1" fill="none" stroke-linecap="round" stroke-linejoin="round"/><rect x="45.5" y="985.5" width="132" height="18.5" rx="4" fill="#282828" stroke="#3a3a3a" stroke-width="0.8"/><rect x="116" y="986" width="1" height="17.5" fill="#3a3a3a"/><path d="M107.2 993.6L110 996.4L112.8 993.6" stroke="#d0d0d0" stroke-width="1.1" fill="none" stroke-linecap="round" stroke-linejoin="round"/><path d="M168.2 993.6L171 996.4L173.8 993.6" stroke="#d0d0d0" stroke-width="1.1" fill="none" stroke-linecap="round" stroke-linejoin="round"/><rect x="700.5" y="985.5" width="38.5" height="18.5" rx="4" fill="#2a2a2a"/><path d="M704.5 985.5H719V1004H704.5A4 4 0 0 1 700.5 1000V989.5A4 4 0 0 1 704.5 985.5Z" fill="#545454"/><circle cx="710" cy="995" r="5" fill="none" stroke="#bdbdbd" stroke-width="1"/><path d="M726.5 994.25L729 996.75L731.5 994.25" stroke="#666" stroke-width="1" fill="none" stroke-linecap="round" stroke-linejoin="round"/><rect x="745.8" y="985.5" width="118.2" height="18.5" rx="4" fill="#545454"/><rect x="764.6" y="986" width="0.8" height="17.5" fill="#3d3d3d"/><rect x="784.3" y="986" width="0.8" height="17.5" fill="#3d3d3d"/><rect x="804.5" y="986" width="0.8" height="17.5" fill="#3d3d3d"/><rect x="824.6" y="986" width="0.8" height="17.5" fill="#3d3d3d"/><rect x="844.3" y="986" width="0.8" height="17.5" fill="#3d3d3d"/><g fill="#ebebeb"><rect x="751" y="990.8" width="1.9" height="8.4"/><path d="M760 990.8V999.2L754 995Z"/><path d="M771.4 990.5L775.8 995L771.4 999.5L767 995Z"/><path d="M782 990.8V999.2L777 995Z"/><path d="M800 989V1001L790 995Z"/><path d="M810 989V1001L820 995Z"/><path d="M827 990.8V999.2L831.6 995Z"/><path d="M837.5 990.5L842 995L837.5 999.5L833 995Z"/><path d="M851 990.8V999.2L857 995Z"/><rect x="858" y="990.8" width="1.9" height="8.4"/></g><rect x="1304.5" y="985.5" width="73" height="18" rx="4" fill="#545454"/><rect x="1384.5" y="985.5" width="193" height="18" rx="4" fill="#545454"/><rect x="1404" y="985.5" width="0.8" height="18" fill="#3d3d3d"/><rect x="1492.5" y="985.5" width="1" height="18" fill="#3d3d3d"/><rect x="1384.5" y="985.5" width="19.5" height="18" rx="4" fill="#3d3d3d"/><rect x="1398" y="985.5" width="6" height="18" fill="#3d3d3d"/><circle cx="1394" cy="995.5" r="5.2" fill="none" stroke="#d8d8d8" stroke-width="1.1"/><path d="M1394 995.5V992.5M1391.5 988.5H1396.5M1394 988.5V990" stroke="#d8d8d8" stroke-width="1.1"/><rect x="1" y="1007" width="1583" height="23" fill="#1d1d1d"/><rect x="1" y="1030" width="1584" height="16.5" fill="#2a2a2a"/><rect x="1" y="1046.5" width="1583" height="10.5" fill="#1d1d1d"/><rect x="23.5" y="1030" width="1.1" height="27" fill="#1e1e1e"/><rect x="53.0" y="1030" width="1.1" height="27" fill="#121212"/><rect x="82.4" y="1030" width="1.1" height="27" fill="#1e1e1e"/><rect x="111.9" y="1030" width="1.1" height="27" fill="#121212"/><rect x="141.4" y="1030" width="1.1" height="27" fill="#1e1e1e"/><rect x="170.8" y="1030" width="1.1" height="27" fill="#121212"/><rect x="200.3" y="1030" width="1.1" height="27" fill="#1e1e1e"/><rect x="229.8" y="1030" width="1.1" height="27" fill="#121212"/><rect x="259.3" y="1030" width="1.1" height="27" fill="#1e1e1e"/><rect x="288.7" y="1030" width="1.1" height="27" fill="#121212"/><rect x="318.2" y="1030" width="1.1" height="27" fill="#1e1e1e"/><rect x="347.7" y="1030" width="1.1" height="27" fill="#121212"/><rect x="377.2" y="1030" width="1.1" height="27" fill="#1e1e1e"/><rect x="406.6" y="1030" width="1.1" height="27" fill="#121212"/><rect x="436.1" y="1030" width="1.1" height="27" fill="#1e1e1e"/><rect x="465.6" y="1030" width="1.1" height="27" fill="#121212"/><rect x="495.1" y="1030" width="1.1" height="27" fill="#1e1e1e"/><rect x="524.5" y="1030" width="1.1" height="27" fill="#121212"/><rect x="554.0" y="1030" width="1.1" height="27" fill="#1e1e1e"/><rect x="583.5" y="1030" width="1.1" height="27" fill="#121212"/><rect x="612.9" y="1030" width="1.1" height="27" fill="#1e1e1e"/><rect x="642.4" y="1030" width="1.1" height="27" fill="#121212"/><rect x="671.9" y="1030" width="1.1" height="27" fill="#1e1e1e"/><rect x="701.4" y="1030" width="1.1" height="27" fill="#121212"/><rect x="730.8" y="1030" width="1.1" height="27" fill="#1e1e1e"/><rect x="760.3" y="1030" width="1.1" height="27" fill="#121212"/><rect x="789.8" y="1030" width="1.1" height="27" fill="#1e1e1e"/><rect x="819.3" y="1030" width="1.1" height="27" fill="#121212"/><rect x="848.7" y="1030" width="1.1" height="27" fill="#1e1e1e"/><rect x="878.2" y="1030" width="1.1" height="27" fill="#121212"/><rect x="907.7" y="1030" width="1.1" height="27" fill="#1e1e1e"/><rect x="937.1" y="1030" width="1.1" height="27" fill="#121212"/><rect x="966.6" y="1030" width="1.1" height="27" fill="#1e1e1e"/><rect x="996.1" y="1030" width="1.1" height="27" fill="#121212"/><rect x="1025.6" y="1030" width="1.1" height="27" fill="#1e1e1e"/><rect x="1055.0" y="1030" width="1.1" height="27" fill="#121212"/><rect x="1084.5" y="1030" width="1.1" height="27" fill="#1e1e1e"/><rect x="1114.0" y="1030" width="1.1" height="27" fill="#121212"/><rect x="1143.5" y="1030" width="1.1" height="27" fill="#1e1e1e"/><rect x="1172.9" y="1030" width="1.1" height="27" fill="#121212"/><rect x="1202.4" y="1030" width="1.1" height="27" fill="#1e1e1e"/><rect x="1231.9" y="1030" width="1.1" height="27" fill="#121212"/><rect x="1261.3" y="1030" width="1.1" height="27" fill="#1e1e1e"/><rect x="1290.8" y="1030" width="1.1" height="27" fill="#121212"/><rect x="1320.3" y="1030" width="1.1" height="27" fill="#1e1e1e"/><rect x="1349.8" y="1030" width="1.1" height="27" fill="#121212"/><rect x="1379.2" y="1030" width="1.1" height="27" fill="#1e1e1e"/><rect x="1408.7" y="1030" width="1.1" height="27" fill="#121212"/><rect x="1438.2" y="1030" width="1.1" height="27" fill="#1e1e1e"/><rect x="1467.7" y="1030" width="1.1" height="27" fill="#121212"/><rect x="1497.1" y="1030" width="1.1" height="27" fill="#1e1e1e"/><rect x="1526.6" y="1030" width="1.1" height="27" fill="#121212"/><rect x="1556.1" y="1030" width="1.1" height="27" fill="#1e1e1e"/><rect x="1526.6" y="1030" width="57.4" height="16.5" fill="#1f1f1f"/><rect x="1526.1" y="1030" width="1.2" height="27" fill="#111"/><rect x="57.8" y="1026" width="1.6" height="31" fill="#4772b3"/><rect x="8.5" y="1047.5" width="1568" height="7" rx="3.5" fill="#555555"/><circle cx="13" cy="1051" r="2.6" fill="#3a3a3a"/><circle cx="1572" cy="1051" r="2.6" fill="#3a3a3a"/><rect x="46.5" y="1010" width="24" height="17" rx="4" fill="#4772b3"/><path d="M2 1022.5L5.5 1026L2 1029.5" stroke="#777" stroke-width="1" fill="none"/><path d="M1583 1027L1579.5 1030.5L1583 1034" stroke="#777" stroke-width="1" fill="none"/></svg><div style="position:absolute;left:53px;top:988.14px;font-size:12px;line-height:14.40px;color:#e6e6e6;white-space:pre;">Playback</div><div style="position:absolute;left:124px;top:988.14px;font-size:12px;line-height:14.40px;color:#e6e6e6;white-space:pre;">Keying</div><div style="position:absolute;left:187px;top:988.14px;font-size:12px;line-height:14.40px;color:#e6e6e6;white-space:pre;">View</div><div style="position:absolute;left:228px;top:988.14px;font-size:12px;line-height:14.40px;color:#e6e6e6;white-space:pre;">Marker</div><div style="position:absolute;left:1141px;width:400px;top:988.14px;font-size:12px;line-height:14.40px;color:#e6e6e6;white-space:pre;text-align:center;">1</div><div style="position:absolute;left:1418px;top:988.14px;font-size:12px;line-height:14.40px;color:#e6e6e6;white-space:pre;">Start</div><div style="position:absolute;right:441px;top:988.14px;font-size:12px;line-height:14.40px;color:#e6e6e6;white-space:pre;text-align:right;">1</div><div style="position:absolute;left:1508px;top:988.14px;font-size:12px;line-height:14.40px;color:#e6e6e6;white-space:pre;">End</div><div style="position:absolute;right:353px;top:988.14px;font-size:12px;line-height:14.40px;color:#e6e6e6;white-space:pre;text-align:right;">250</div><div style="position:absolute;left:-141.7px;width:400px;top:1011.64px;font-size:12px;line-height:14.40px;color:#ffffff;white-space:pre;text-align:center;">1</div><div style="position:absolute;left:-88.0986px;width:400px;top:1011.64px;font-size:12px;line-height:14.40px;color:#d8d8d8;white-space:pre;text-align:center;">10</div><div style="position:absolute;left:-29.152600000000007px;width:400px;top:1011.64px;font-size:12px;line-height:14.40px;color:#d8d8d8;white-space:pre;text-align:center;">20</div><div style="position:absolute;left:29.79339999999999px;width:400px;top:1011.64px;font-size:12px;line-height:14.40px;color:#d8d8d8;white-space:pre;text-align:center;">30</div><div style="position:absolute;left:88.73939999999999px;width:400px;top:1011.64px;font-size:12px;line-height:14.40px;color:#d8d8d8;white-space:pre;text-align:center;">40</div><div style="position:absolute;left:147.68540000000002px;width:400px;top:1011.64px;font-size:12px;line-height:14.40px;color:#d8d8d8;white-space:pre;text-align:center;">50</div><div style="position:absolute;left:206.63139999999999px;width:400px;top:1011.64px;font-size:12px;line-height:14.40px;color:#d8d8d8;white-space:pre;text-align:center;">60</div><div style="position:absolute;left:265.5774px;width:400px;top:1011.64px;font-size:12px;line-height:14.40px;color:#d8d8d8;white-space:pre;text-align:center;">70</div><div style="position:absolute;left:324.5233999999999px;width:400px;top:1011.64px;font-size:12px;line-height:14.40px;color:#d8d8d8;white-space:pre;text-align:center;">80</div><div style="position:absolute;left:383.46939999999995px;width:400px;top:1011.64px;font-size:12px;line-height:14.40px;color:#d8d8d8;white-space:pre;text-align:center;">90</div><div style="position:absolute;left:442.4154px;width:400px;top:1011.64px;font-size:12px;line-height:14.40px;color:#d8d8d8;white-space:pre;text-align:center;">100</div><div style="position:absolute;left:501.3614px;width:400px;top:1011.64px;font-size:12px;line-height:14.40px;color:#d8d8d8;white-space:pre;text-align:center;">110</div><div style="position:absolute;left:560.3074px;width:400px;top:1011.64px;font-size:12px;line-height:14.40px;color:#d8d8d8;white-space:pre;text-align:center;">120</div><div style="position:absolute;left:619.2533999999999px;width:400px;top:1011.64px;font-size:12px;line-height:14.40px;color:#d8d8d8;white-space:pre;text-align:center;">130</div><div style="position:absolute;left:678.1994px;width:400px;top:1011.64px;font-size:12px;line-height:14.40px;color:#d8d8d8;white-space:pre;text-align:center;">140</div><div style="position:absolute;left:737.1454px;width:400px;top:1011.64px;font-size:12px;line-height:14.40px;color:#d8d8d8;white-space:pre;text-align:center;">150</div><div style="position:absolute;left:796.0913999999999px;width:400px;top:1011.64px;font-size:12px;line-height:14.40px;color:#d8d8d8;white-space:pre;text-align:center;">160</div><div style="position:absolute;left:855.0373999999999px;width:400px;top:1011.64px;font-size:12px;line-height:14.40px;color:#d8d8d8;white-space:pre;text-align:center;">170</div><div style="position:absolute;left:913.9833999999998px;width:400px;top:1011.64px;font-size:12px;line-height:14.40px;color:#d8d8d8;white-space:pre;text-align:center;">180</div><div style="position:absolute;left:972.9293999999998px;width:400px;top:1011.64px;font-size:12px;line-height:14.40px;color:#d8d8d8;white-space:pre;text-align:center;">190</div><div style="position:absolute;left:1031.8754px;width:400px;top:1011.64px;font-size:12px;line-height:14.40px;color:#d8d8d8;white-space:pre;text-align:center;">200</div><div style="position:absolute;left:1090.8213999999998px;width:400px;top:1011.64px;font-size:12px;line-height:14.40px;color:#d8d8d8;white-space:pre;text-align:center;">210</div><div style="position:absolute;left:1149.7673999999997px;width:400px;top:1011.64px;font-size:12px;line-height:14.40px;color:#d8d8d8;white-space:pre;text-align:center;">220</div><div style="position:absolute;left:1208.7133999999999px;width:400px;top:1011.64px;font-size:12px;line-height:14.40px;color:#d8d8d8;white-space:pre;text-align:center;">230</div><div style="position:absolute;left:1267.6593999999998px;width:400px;top:1011.64px;font-size:12px;line-height:14.40px;color:#d8d8d8;white-space:pre;text-align:center;">240</div><div style="position:absolute;left:1326.6054px;width:400px;top:1011.64px;font-size:12px;line-height:14.40px;color:#d8d8d8;white-space:pre;text-align:center;">250</div><svg style="position:absolute;left:0px;top:0px;" width="1919" height="1079" viewBox="0 0 1919 1079"><rect x="10.5" y="1061" width="11" height="15" rx="3.5" fill="none" stroke="#aaa" stroke-width="1"/><path d="M11 1068V1064.5A3 3 0 0 1 14 1061.5H15.5V1068Z" fill="#999"/><path d="M23.5 1061.5V1068.5M25.5 1062V1066" stroke="#aaa" stroke-width="0.9"/><rect x="73.5" y="1061" width="11" height="15" rx="3.5" fill="none" stroke="#aaa" stroke-width="1"/><path d="M80 1061.5H81A3 3 0 0 1 84 1064.5V1068H80Z" fill="#999"/></svg><div style="position:absolute;left:29.5px;top:1062.10px;font-size:11.3px;line-height:13.56px;color:#b4b4b4;white-space:pre;">Resize</div><div style="position:absolute;left:89.5px;top:1062.10px;font-size:11.3px;line-height:13.56px;color:#b4b4b4;white-space:pre;">Options</div><div style="position:absolute;right:11px;top:1061.82px;font-size:11.6px;line-height:13.92px;color:#9a9a9a;white-space:pre;text-align:right;">4.3.2</div></div></body></html>
